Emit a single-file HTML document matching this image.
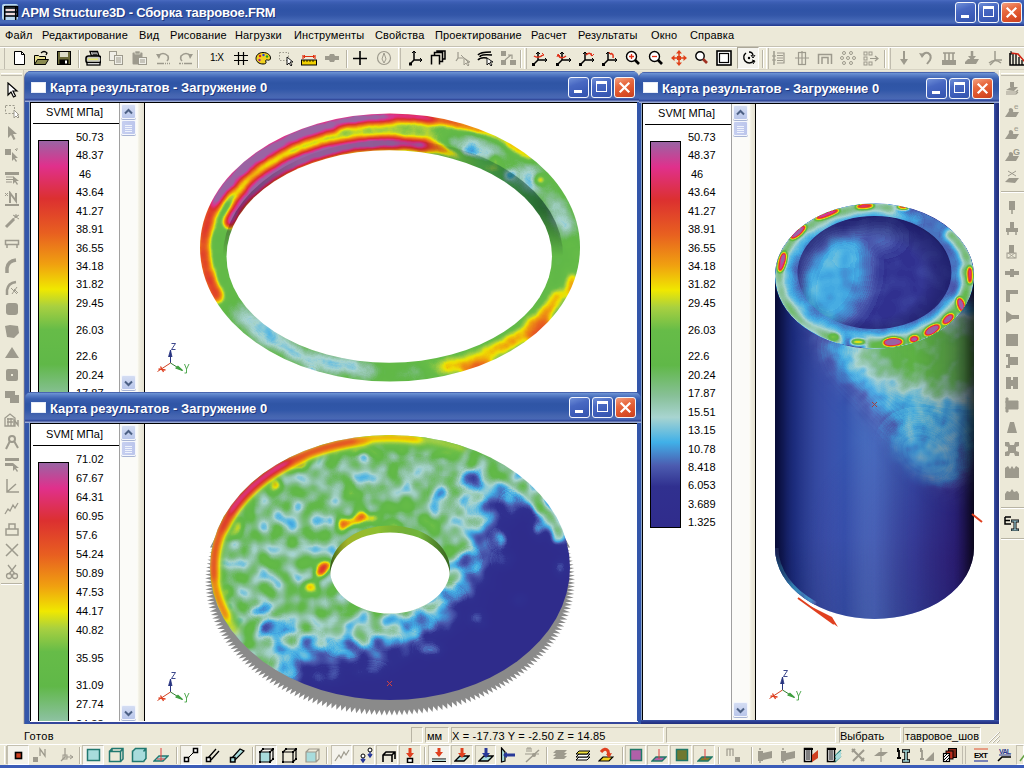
<!DOCTYPE html>
<html><head><meta charset="utf-8"><style>
*{box-sizing:border-box;margin:0;padding:0}
html,body{width:1024px;height:768px;overflow:hidden;background:#ece9d8;font-family:"Liberation Sans",sans-serif;position:relative}
div,svg{position:absolute}
.t11{font-size:11px;line-height:13px;white-space:nowrap;color:#000}
.tb{border:1px solid #f4f6fc;border-radius:3px;background:linear-gradient(160deg,#7090d8 0%,#4868c2 35%,#3c5cb8 70%,#3454ad 100%)}
.tb.close{background:linear-gradient(160deg,#f4a080 0%,#e86a40 35%,#dc5028 70%,#c84020 100%)}
.cap{left:0;top:0;right:0;height:31px;background:linear-gradient(#22368a 0px,#6f95d5 1px,#5a80c8 3px,#3a5fb0 7px,#2f55a5 12px,#3157a8 18px,#4565b0 24px,#4868b5 27px,#3a55a8 28px,#2c4090 29px,#9aaad5 30px,#9aaad5 31px)}
.ct{top:10px;color:#fff;font:bold 13px "Liberation Sans",sans-serif;line-height:15px;white-space:nowrap;text-shadow:1px 1px 0 #22387e}
.ic{width:15px;height:11px;background:#fff;border:1px solid #e6ecf8}
.sbtn{width:15px;height:15px;border-radius:2px;background:linear-gradient(#d4ddf3,#b9c6ea);border:1px solid #f4f6fc;box-shadow:0 1px 0 #a8b4d4}
.sp{height:16px;border:1px solid;border-color:#b8b4a4 #fff #fff #b8b4a4}
.bpress{border:1px solid;border-color:#aca899 #fff #fff #aca899;background:#f5f4ee}
.vsep{width:2px;border-left:1px solid #b8b4a4;border-right:1px solid #fff}
.hsep{height:2px;border-top:1px solid #b8b4a4;border-bottom:1px solid #fff}
</style></head><body>
<div style="left:0;top:0;width:1024px;height:26px;background:linear-gradient(#4a6bc0 0px,#3d5fb5 2px,#3558ab 5px,#2f53a6 10px,#3356a8 15px,#3f62b2 19px,#4a6bb8 22px,#3a58ac 24px,#263e92 25px)"></div>
<div style="left:0;top:26px;width:1024px;height:1px;background:#f6f4ec"></div>
<svg style="left:2px;top:3px" width="17" height="18" viewBox="0 0 17 18"><rect x="0" y="1" width="16" height="16" rx="2" fill="#b8d8f0"/><path d="M3 5 H15 M3 9 H15 M3 13 H15" stroke="#000" stroke-width="1.5"/><path d="M4 7 H14 M4 11 H14" stroke="#f0d8d8" stroke-width="2.2"/><path d="M2.7 3 V17 M13.7 4 V17 M15.5 3 V14" stroke="#000" stroke-width="1.5"/><path d="M3 3.5 H15.5" stroke="#000" stroke-width="1.5"/></svg>
<div style="left:21px;top:5px;color:#fff;font:bold 13px 'Liberation Sans',sans-serif;line-height:15px;letter-spacing:-0.18px;white-space:nowrap;text-shadow:1px 1px 0 #22387e">APM Structure3D - Сборка тавровое.FRM</div>
<div class="tb" style="left:955px;top:2px;width:21px;height:21px"><div style="left:5px;top:12px;width:8px;height:3px;background:#fff"></div></div><div class="tb" style="left:978px;top:2px;width:21px;height:21px"><div style="left:4px;top:3px;width:11px;height:11px;border:1px solid #fff;border-top-width:3px"></div></div><div class="tb close" style="left:1001px;top:2px;width:21px;height:21px"><svg style="left:0;top:0" width="19" height="19"><path d="M5.5 5.5 L13.5 13.5 M13.5 5.5 L5.5 13.5" stroke="#fff" stroke-width="2.2" stroke-linecap="square"/></svg></div>
<div class="t11" style="left:5px;top:29px;letter-spacing:0.15px">Файл</div>
<div class="t11" style="left:42px;top:29px;letter-spacing:0.15px">Редактирование</div>
<div class="t11" style="left:139px;top:29px;letter-spacing:0.15px">Вид</div>
<div class="t11" style="left:170px;top:29px;letter-spacing:0.15px">Рисование</div>
<div class="t11" style="left:235px;top:29px;letter-spacing:0.15px">Нагрузки</div>
<div class="t11" style="left:294px;top:29px;letter-spacing:0.15px">Инструменты</div>
<div class="t11" style="left:375px;top:29px;letter-spacing:0.15px">Свойства</div>
<div class="t11" style="left:435px;top:29px;letter-spacing:0.15px">Проектирование</div>
<div class="t11" style="left:531px;top:29px;letter-spacing:0.15px">Расчет</div>
<div class="t11" style="left:578px;top:29px;letter-spacing:0.15px">Результаты</div>
<div class="t11" style="left:651px;top:29px;letter-spacing:0.15px">Окно</div>
<div class="t11" style="left:690px;top:29px;letter-spacing:0.15px">Справка</div>
<div style="left:0;top:46px;width:1024px;height:1px;background:#c5c1b2"></div>
<div style="left:0;top:47px;width:1024px;height:1px;background:#fff"></div>
<div style="left:0;top:48px;width:1024px;height:22px;background:#ece9d8"></div>
<div style="left:0;top:69px;width:1024px;height:1px;background:#d8d4c4"></div>
<div style="left:4px;top:48px;width:1px;height:21px;background:#c0bcae"></div>
<div class="vsep" style="left:78px;top:50px;height:18px"></div>
<div class="vsep" style="left:197px;top:50px;height:18px"></div>
<div class="vsep" style="left:346px;top:50px;height:18px"></div>
<div class="vsep" style="left:520px;top:50px;height:18px"></div>
<div class="vsep" style="left:762px;top:50px;height:18px"></div>
<div class="vsep" style="left:884px;top:50px;height:18px"></div>
<div style="left:398px;top:48px;width:3px;height:21px;border-left:1px solid #fff;border-right:1px solid #c0bcae"></div>
<div style="left:524px;top:48px;width:3px;height:21px;border-left:1px solid #fff;border-right:1px solid #c0bcae"></div>
<div style="left:766px;top:48px;width:3px;height:21px;border-left:1px solid #fff;border-right:1px solid #c0bcae"></div>
<div style="left:888px;top:48px;width:3px;height:21px;border-left:1px solid #fff;border-right:1px solid #c0bcae"></div>
<svg style="left:12px;top:50px" width="16" height="16" viewBox="0 0 16 16"><path d="M2.5 1.5 H9.5 L12.5 4.5 V14.5 H2.5 Z" fill="#fff" stroke="#000"/><path d="M9.5 1.5 V4.5 H12.5" fill="none" stroke="#000"/></svg>
<svg style="left:33px;top:50px" width="16" height="16" viewBox="0 0 16 16"><path d="M1.5 5.5 H5.5 L6.5 6.5 H12.5 V14.5 H1.5 Z" fill="#e8e090" stroke="#000"/><path d="M1.5 14.5 L4.5 9.5 H15.5 L12.5 14.5 Z" fill="#8a8a50" stroke="#000"/><path d="M8 3 Q11 0 14 3 L13 5" fill="none" stroke="#000" stroke-width="1.2"/></svg>
<svg style="left:56px;top:50px" width="16" height="16" viewBox="0 0 16 16"><rect x="1.5" y="1.5" width="13" height="13" fill="#6a6a38" stroke="#000"/><rect x="4" y="2" width="8" height="5" fill="#dcdcc8"/><rect x="3.5" y="9.5" width="9" height="5" fill="#000"/><rect x="9" y="10.5" width="2" height="3" fill="#fff"/></svg>
<svg style="left:85px;top:50px" width="16" height="16" viewBox="0 0 16 16"><path d="M5 1.5 H12.5 L14 6 H6.5 Z" fill="#fff" stroke="#000" stroke-width="1.3"/><path d="M7 3 H12 M7.5 4.5 H12.5" stroke="#000" stroke-width="0.8"/><rect x="1" y="6" width="15" height="7" rx="2.5" fill="#c8c8c0" stroke="#000" stroke-width="1.6"/><rect x="3" y="8.5" width="10" height="1.6" fill="#e8e870"/><rect x="2" y="12.5" width="13" height="2.5" fill="#fff" stroke="#000" stroke-width="1.3"/></svg>
<svg style="left:108px;top:50px" width="16" height="16" viewBox="0 0 16 16"><rect x="1.5" y="1.5" width="7" height="9" fill="#f0efe8" stroke="#9d9a8d"/><rect x="6.5" y="5.5" width="8" height="9" fill="#f0efe8" stroke="#9d9a8d"/><path d="M8 8 H13 M8 10 H13 M8 12 H13" stroke="#9d9a8d"/></svg>
<svg style="left:131px;top:50px" width="16" height="16" viewBox="0 0 16 16"><rect x="1.5" y="2.5" width="10" height="12" rx="1" fill="#9d9a8d"/><rect x="4" y="1" width="5" height="3" fill="#9d9a8d" stroke="#ece9d8" stroke-width="0.6"/><rect x="7.5" y="7.5" width="8" height="7" fill="#f0efe8" stroke="#9d9a8d"/><path d="M9 10 H14 M9 12 H14" stroke="#9d9a8d"/></svg>
<svg style="left:155px;top:50px" width="16" height="16" viewBox="0 0 16 16"><path d="M3 6 Q8 1 13 6 Q14 9 12 11" fill="none" stroke="#9d9a8d" stroke-width="1.6"/><path d="M1 4 L4 9 L6 4 Z" fill="#9d9a8d"/><path d="M2 13.5 H15" stroke="#9d9a8d" stroke-width="1.5" stroke-dasharray="7 1 1 1 1 1"/></svg>
<svg style="left:178px;top:50px" width="16" height="16" viewBox="0 0 16 16"><path d="M13 6 Q8 1 3 6 Q2 9 4 11" fill="none" stroke="#9d9a8d" stroke-width="1.6"/><path d="M15 4 L12 9 L10 4 Z" fill="#9d9a8d"/><path d="M1 13.5 H14" stroke="#9d9a8d" stroke-width="1.5" stroke-dasharray="2 1 1 1 9 1"/></svg>
<div style="left:210px;top:52px;font:10px 'Liberation Sans',sans-serif;line-height:12px;letter-spacing:-0.6px;color:#000">1:X</div>
<svg style="left:233px;top:50px" width="16" height="16" viewBox="0 0 16 16"><path d="M5.5 2 V15 M10.5 2 V15 M1 5.5 H15 M1 10.5 H15" stroke="#000" stroke-width="1.2"/></svg>
<svg style="left:255px;top:50px" width="16" height="16" viewBox="0 0 16 16"><path d="M8 2.5 C13 2.5 15.5 5.5 15.5 8 C15.5 10 14 10.5 12.5 10 C11 9.5 10 10.5 11 12 C11.5 13.5 10 14 8 14 C4 14 1 11.5 1 8.5 C1 5 4 2.5 8 2.5 Z" fill="#f0d020" stroke="#000"/><circle cx="5" cy="6" r="1.2" fill="#e02020"/><circle cx="8.5" cy="5" r="1.2" fill="#2040e0"/><circle cx="12" cy="6.5" r="1.2" fill="#20a020"/><circle cx="4.5" cy="10" r="1.2" fill="#a020a0"/></svg>
<svg style="left:278px;top:50px" width="16" height="16" viewBox="0 0 16 16"><rect x="1.5" y="2.5" width="9" height="8" fill="none" stroke="#9d9a8d" stroke-dasharray="1.5 1.5"/><path d="M9 7 L9 15 L11 13 L13 16 L14 15 L12 12 L15 12 Z" fill="#fff" stroke="#000" stroke-width="0.9"/></svg>
<svg style="left:301px;top:50px" width="16" height="16" viewBox="0 0 16 16"><path d="M2 5 V9 M14 5 V9 M3 6.5 H13" stroke="#e03010" stroke-width="1.2"/><path d="M4 5 L2.5 6.5 L4 8 M12 5 L13.5 6.5 L12 8" fill="none" stroke="#e03010"/><rect x="0.5" y="10" width="15" height="5" fill="#f0d000" stroke="#000"/><path d="M3 10 V12 M6 10 V12 M9 10 V12 M12 10 V12" stroke="#000" stroke-width="0.8"/></svg>
<svg style="left:324px;top:50px" width="16" height="16" viewBox="0 0 16 16"><path d="M1 6 H5 L6 4 H10 L11 6 H15 V10 H11 L10 12 H6 L5 10 H1 Z" fill="#9d9a8d"/></svg>
<svg style="left:352px;top:50px" width="16" height="16" viewBox="0 0 16 16"><path d="M8 1 V15 M1 8.5 H15" stroke="#000" stroke-width="1.6"/></svg>
<svg style="left:376px;top:50px" width="16" height="16" viewBox="0 0 16 16"><circle cx="8" cy="8" r="6.5" fill="none" stroke="#9d9a8d" stroke-width="1.2"/><path d="M8 3 L10 9 L8 13 L6 9 Z" fill="none" stroke="#9d9a8d"/></svg>
<svg style="left:408px;top:50px" width="16" height="16" viewBox="0 0 16 16"><path d="M6 2 V10 L2 14 M6 10 H14" fill="none" stroke="#000" stroke-width="1.5"/><path d="M4 3 L6 1 L8 3 M12 8 L14 10 L12 12" fill="none" stroke="#000"/><rect x="1" y="12.5" width="3" height="3" fill="#000"/></svg>
<svg style="left:430px;top:50px" width="16" height="16" viewBox="0 0 16 16"><path d="M1.5 14.5 V5.5 H9.5 V14.5 M4.5 5.5 V2.5 H12.5 V11.5 H9.5 M7 2.5 V1 H15 V9 H12.5" fill="none" stroke="#000" stroke-width="1.5"/></svg>
<svg style="left:455px;top:50px" width="16" height="16" viewBox="0 0 16 16"><path d="M3 2 V8 L1 11 M3 8 H8" fill="none" stroke="#9d9a8d" stroke-width="1.2"/><path d="M6 5 L14 13 M9 8 L9 15 L11 13 L13 16 L14 15 L12 12 L15 12 Z" fill="none" stroke="#9d9a8d"/></svg>
<svg style="left:477px;top:50px" width="16" height="16" viewBox="0 0 16 16"><path d="M1 5 Q3 2 14 2 M3 7 Q3 4 15 5 M1 10 Q3 7 10 8" fill="none" stroke="#000" stroke-width="1.6"/><path d="M10 8 L10 15 L12 13 L14 16 L15 15 L13 12 L16 12 Z" fill="#fff" stroke="#000" stroke-width="0.9"/></svg>
<svg style="left:500px;top:50px" width="16" height="16" viewBox="0 0 16 16"><rect x="1" y="1" width="5" height="5" fill="#9d9a8d"/><rect x="10" y="10" width="6" height="5" fill="#9d9a8d"/><rect x="1" y="10" width="5" height="5" fill="#9d9a8d"/><path d="M5 10 L11 5 M8 5 H12 V9" fill="none" stroke="#9d9a8d" stroke-width="1.2"/></svg>
<svg style="left:532px;top:50px" width="16" height="16" viewBox="0 0 16 16"><path d="M6 3 V10 L1 15 M6 10 H15" fill="none" stroke="#000" stroke-width="1.5"/><path d="M4 4 L6 2 L8 4 M13 8 L15 10 L13 12" fill="none" stroke="#000"/><rect x="0" y="13" width="3" height="3" fill="#000"/><path d="M2 6 Q6 9 11 5" fill="none" stroke="#e03018" stroke-width="1.5"/><path d="M10 3 L12 5 L9 6" fill="none" stroke="#e03018"/></svg>
<svg style="left:556px;top:50px" width="16" height="16" viewBox="0 0 16 16"><path d="M6 3 V10 L1 15 M6 10 H15" fill="none" stroke="#000" stroke-width="1.5"/><path d="M4 4 L6 2 L8 4 M13 8 L15 10 L13 12" fill="none" stroke="#000"/><rect x="0" y="13" width="3" height="3" fill="#000"/><path d="M2 5 Q5 10 10 6" fill="none" stroke="#e03018" stroke-width="1.5"/><path d="M1 7 L2 4 L4 6" fill="none" stroke="#e03018"/></svg>
<svg style="left:579px;top:50px" width="16" height="16" viewBox="0 0 16 16"><path d="M6 3 V10 L1 15 M6 10 H15" fill="none" stroke="#000" stroke-width="1.5"/><path d="M4 4 L6 2 L8 4 M13 8 L15 10 L13 12" fill="none" stroke="#000"/><rect x="0" y="13" width="3" height="3" fill="#000"/><path d="M7 5 Q11 1 13 6" fill="none" stroke="#e03018" stroke-width="1.5"/><path d="M12 3 L13 6 L15 4" fill="none" stroke="#e03018"/></svg>
<svg style="left:602px;top:50px" width="16" height="16" viewBox="0 0 16 16"><path d="M6 3 V10 L1 15 M6 10 H15" fill="none" stroke="#000" stroke-width="1.5"/><path d="M4 4 L6 2 L8 4 M13 8 L15 10 L13 12" fill="none" stroke="#000"/><rect x="0" y="13" width="3" height="3" fill="#000"/><path d="M8 4 Q12 3 11 8" fill="none" stroke="#e03018" stroke-width="1.5"/><path d="M7 2 L8 4 L10 3" fill="none" stroke="#e03018"/></svg>
<svg style="left:625px;top:50px" width="16" height="16" viewBox="0 0 16 16"><circle cx="6.5" cy="6.5" r="5" fill="#fff" stroke="#000" stroke-width="1.4"/><path d="M4 6.5 H9 M6.5 4 V9" stroke="#e03018" stroke-width="1.3"/><path d="M10 10 L14 14" stroke="#000" stroke-width="2.6"/></svg>
<svg style="left:648px;top:50px" width="16" height="16" viewBox="0 0 16 16"><circle cx="6.5" cy="6.5" r="5" fill="#fff" stroke="#000" stroke-width="1.4"/><path d="M4 6.5 H9" stroke="#e03018" stroke-width="1.3"/><path d="M10 10 L14 14" stroke="#000" stroke-width="2.6"/></svg>
<svg style="left:671px;top:50px" width="16" height="16" viewBox="0 0 16 16"><path d="M8 0 L11 3.5 H5 Z M8 16 L11 12.5 H5 Z M0 8 L3.5 5 V11 Z M16 8 L12.5 5 V11 Z" fill="#e04018"/><rect x="6" y="6" width="4" height="4" fill="#e04018"/><path d="M8 3 V13 M3 8 H13" stroke="#e04018" stroke-width="1.5"/></svg>
<svg style="left:694px;top:50px" width="16" height="16" viewBox="0 0 16 16"><circle cx="6" cy="6" r="4.2" fill="#fff" stroke="#000" stroke-width="1.4"/><path d="M9 9 L13 13" stroke="#a03020" stroke-width="2.6"/></svg>
<svg style="left:716px;top:50px" width="16" height="16" viewBox="0 0 16 16"><rect x="1" y="1" width="14" height="14" fill="#fff" stroke="#000" stroke-width="1.6"/><rect x="3.5" y="3.5" width="9" height="9" fill="#fff" stroke="#000" stroke-width="1.2"/></svg>
<div class="bpress" style="left:737px;top:47px;width:22px;height:22px"></div>
<svg style="left:741px;top:50px" width="16" height="16" viewBox="0 0 16 16"><path d="M5 3 Q1 6 4 11 Q8 15 13 11" fill="none" stroke="#000" stroke-width="1.4"/><path d="M8 2 Q12 2 12 6" fill="none" stroke="#000" stroke-width="1.4"/><path d="M10 5 L12 8 L14 5 M11 10 L14 11 L12 14" fill="none" stroke="#000"/><circle cx="8" cy="8" r="1.2" fill="#000"/></svg>
<svg style="left:771px;top:50px" width="16" height="16" viewBox="0 0 16 16"><path d="M3 1 V15" stroke="#9d9a8d" stroke-width="1.5"/><path d="M6 3 H13 V13 H6 M6 5.5 H12 M6 8 H12 M6 10.5 H12" fill="none" stroke="#9d9a8d" stroke-width="1.2"/><path d="M1 6 H5 M1 10 H5" stroke="#9d9a8d"/></svg>
<svg style="left:794px;top:50px" width="16" height="16" viewBox="0 0 16 16"><rect x="4.5" y="2.5" width="7" height="12" fill="none" stroke="#9d9a8d" stroke-width="1.2"/><path d="M1 8 H15 M8 1 V15" stroke="#9d9a8d" stroke-width="1.2"/></svg>
<svg style="left:817px;top:50px" width="16" height="16" viewBox="0 0 16 16"><path d="M1.5 14 V4.5 H14.5 V14 M5 14 V7.5 H11 V14" fill="none" stroke="#9d9a8d" stroke-width="1.5"/></svg>
<svg style="left:840px;top:50px" width="16" height="16" viewBox="0 0 16 16"><circle cx="4" cy="3" r="1.5" fill="none" stroke="#9d9a8d"/><circle cx="11" cy="3" r="1.5" fill="none" stroke="#9d9a8d"/><circle cx="2" cy="8" r="1.5" fill="none" stroke="#9d9a8d"/><circle cx="14" cy="8" r="1.5" fill="none" stroke="#9d9a8d"/><circle cx="4" cy="13" r="1.5" fill="none" stroke="#9d9a8d"/><circle cx="11" cy="13" r="1.5" fill="none" stroke="#9d9a8d"/><circle cx="8" cy="8" r="1.5" fill="none" stroke="#9d9a8d"/></svg>
<svg style="left:863px;top:50px" width="16" height="16" viewBox="0 0 16 16"><rect x="1" y="2" width="3" height="3" fill="none" stroke="#9d9a8d"/><rect x="6" y="2" width="3" height="3" fill="none" stroke="#9d9a8d"/><rect x="1" y="7" width="3" height="3" fill="none" stroke="#9d9a8d"/><rect x="1" y="12" width="3" height="3" fill="none" stroke="#9d9a8d"/><rect x="6" y="12" width="3" height="3" fill="none" stroke="#9d9a8d"/><path d="M7 8.5 H15 M12 6 L15 8.5 L12 11" fill="none" stroke="#9d9a8d" stroke-width="1.2"/></svg>
<svg style="left:896px;top:50px" width="16" height="16" viewBox="0 0 16 16"><path d="M8 1 V13" stroke="#9d9a8d" stroke-width="2"/><path d="M4 9 L8 15 L12 9 Z" fill="#9d9a8d"/></svg>
<svg style="left:918px;top:50px" width="16" height="16" viewBox="0 0 16 16"><path d="M4 6 Q6 2 10 3 Q14 5 12 10 L9 14" fill="none" stroke="#9d9a8d" stroke-width="2"/><path d="M1 3 L4 8 L7 4 Z" fill="#9d9a8d"/></svg>
<svg style="left:941px;top:50px" width="16" height="16" viewBox="0 0 16 16"><rect x="1" y="10" width="14" height="5" fill="#9d9a8d"/><path d="M4 3 V10 M8 3 V10 M12 3 V10 M2 3 H14" stroke="#9d9a8d" stroke-width="1.6"/></svg>
<svg style="left:964px;top:50px" width="16" height="16" viewBox="0 0 16 16"><path d="M1 12 L4 9 H15 L12 14 H1 Z" fill="#9d9a8d"/><path d="M8 1 V9" stroke="#9d9a8d" stroke-width="2.5"/><path d="M4 6 L8 11 L12 6 Z" fill="#9d9a8d"/></svg>
<svg style="left:987px;top:50px" width="16" height="16" viewBox="0 0 16 16"><path d="M8 1 V10 L3 15 M8 10 H15" fill="none" stroke="#9d9a8d" stroke-width="1.5"/><path d="M2 13 Q8 8 14 13" fill="none" stroke="#9d9a8d" stroke-width="1.5"/></svg>
<svg style="left:1009px;top:50px" width="16" height="16" viewBox="0 0 16 16"><path d="M1 3 V15 H16" fill="none" stroke="#000" stroke-width="1.5"/><path d="M4 4 V15 M7 4 V15 M10 7 V15 M13 10 V15" stroke="#000" stroke-width="1.3"/><path d="M2 3 L9 4 L16 12" fill="none" stroke="#d02010" stroke-width="1.5"/><path d="M2 1 L2 5" stroke="#000"/></svg>
<div style="left:0;top:70px;width:23px;height:658px;background:#ece9d8"></div>
<div style="left:1px;top:73px;width:21px;height:3px;border-top:1px solid #fff;border-bottom:1px solid #c0bcae"></div>
<div style="left:23px;top:70px;width:1px;height:658px;background:#d0ccbc"></div>
<svg style="left:4px;top:82px" width="16" height="16" viewBox="0 0 16 16"><path d="M4 1 V13 L7 10 L9.5 15 L11.5 14 L9 9 H13 Z" fill="#fff" stroke="#000" stroke-width="1.2"/></svg>
<svg style="left:4px;top:103px" width="16" height="16" viewBox="0 0 16 16"><rect x="1.5" y="2.5" width="9" height="8" fill="none" stroke="#9d9a8d" stroke-dasharray="2 1.5"/><path d="M10 7 V15 L12 13 L14 15 L15 14 L13 12 H15 Z" fill="#fff" stroke="#9d9a8d"/></svg>
<svg style="left:4px;top:125px" width="16" height="16" viewBox="0 0 16 16"><path d="M4 1 V13 L7 10 L9.5 15 L11.5 14 L9 9 H13 Z" fill="#9d9a8d"/></svg>
<svg style="left:4px;top:147px" width="16" height="16" viewBox="0 0 16 16"><rect x="1" y="2" width="6" height="6" fill="#9d9a8d"/><path d="M8 5 V14 L10 12 L12 15 L13 14 L11 11 H14 Z" fill="#9d9a8d"/><path d="M11 2 L13 4 M13 1 V3" stroke="#9d9a8d"/></svg>
<svg style="left:4px;top:169px" width="16" height="16" viewBox="0 0 16 16"><rect x="1" y="3" width="14" height="3" fill="#9d9a8d"/><path d="M2 8 H9 M2 10.5 H9 M2 13 H8" stroke="#9d9a8d" stroke-width="1.2"/><path d="M9 7 V15 L11 13 L13 16 L14 15 L12 12 H15 Z" fill="#9d9a8d"/></svg>
<svg style="left:4px;top:191px" width="16" height="16" viewBox="0 0 16 16"><path d="M1 2 L4 5 M4 2 L1 5" stroke="#9d9a8d"/><path d="M6 12 V2 L12 10 V2" fill="none" stroke="#9d9a8d" stroke-width="2"/><rect x="1" y="13" width="14" height="2" fill="#9d9a8d"/></svg>
<svg style="left:4px;top:213px" width="16" height="16" viewBox="0 0 16 16"><path d="M2 14 L10 6" stroke="#9d9a8d" stroke-width="3"/><path d="M12 1 V5 M10 3 H14 M9 2 L15 6 M15 2 L9 6" stroke="#9d9a8d"/></svg>
<svg style="left:4px;top:236px" width="16" height="16" viewBox="0 0 16 16"><rect x="1.5" y="4.5" width="13" height="4" fill="none" stroke="#9d9a8d" stroke-width="1.5"/><path d="M3 8 V12 M13 8 V12" stroke="#9d9a8d" stroke-width="1.5"/></svg>
<svg style="left:4px;top:258px" width="16" height="16" viewBox="0 0 16 16"><path d="M3 15 V10 Q4 3 12 2" fill="none" stroke="#9d9a8d" stroke-width="3.5"/></svg>
<svg style="left:4px;top:280px" width="16" height="16" viewBox="0 0 16 16"><path d="M3 15 V10 Q4 3 12 2" fill="none" stroke="#9d9a8d" stroke-width="2.5"/><path d="M7 8 L13 14 M10 9 L14 13 M13 7 L8 14" stroke="#9d9a8d"/></svg>
<svg style="left:4px;top:301px" width="16" height="16" viewBox="0 0 16 16"><rect x="2" y="2" width="12" height="12" rx="3" fill="#9d9a8d"/></svg>
<svg style="left:4px;top:323px" width="16" height="16" viewBox="0 0 16 16"><path d="M1 3 L6 2 L14 3 L15 10 L10 15 L3 14 Z" fill="#9d9a8d"/></svg>
<svg style="left:4px;top:345px" width="16" height="16" viewBox="0 0 16 16"><path d="M8 2 L15 13 H1 Z" fill="#9d9a8d"/></svg>
<svg style="left:4px;top:367px" width="16" height="16" viewBox="0 0 16 16"><rect x="2" y="2" width="12" height="12" rx="2" fill="#9d9a8d"/><rect x="7" y="7" width="2" height="2" fill="#ece9d8"/></svg>
<svg style="left:4px;top:389px" width="16" height="16" viewBox="0 0 16 16"><path d="M1 2 H11 V6 H15 V14 H6 V9 H1 Z" fill="#9d9a8d"/></svg>
<svg style="left:4px;top:412px" width="16" height="16" viewBox="0 0 16 16"><path d="M1 14 V6 L6 2 L11 6 V14 Z M3 7 H9 M3 10 H9 M4 6 V14 M7 6 V14" fill="none" stroke="#9d9a8d" stroke-width="1.3"/><path d="M10 14 V8 L14 13 V8" fill="none" stroke="#9d9a8d" stroke-width="1.5"/></svg>
<svg style="left:4px;top:435px" width="16" height="16" viewBox="0 0 16 16"><circle cx="8" cy="4" r="3" fill="none" stroke="#9d9a8d" stroke-width="2"/><path d="M6 6 L2 14 M10 6 L14 13" stroke="#9d9a8d" stroke-width="2"/></svg>
<svg style="left:4px;top:456px" width="16" height="16" viewBox="0 0 16 16"><rect x="1" y="2" width="14" height="3" fill="#9d9a8d"/><rect x="1" y="7" width="8" height="3" fill="#9d9a8d"/><path d="M9 7 V15 L11 13 L13 16 L14 15 L12 12 H15 Z" fill="#9d9a8d"/></svg>
<svg style="left:4px;top:478px" width="16" height="16" viewBox="0 0 16 16"><path d="M3 1 V14 H15 M3 14 L12 6" fill="none" stroke="#9d9a8d" stroke-width="1.5"/></svg>
<svg style="left:4px;top:500px" width="16" height="16" viewBox="0 0 16 16"><path d="M1 14 L4 9 L6 11 L9 5 L11 8 L14 3" fill="none" stroke="#9d9a8d" stroke-width="1.3"/></svg>
<svg style="left:4px;top:521px" width="16" height="16" viewBox="0 0 16 16"><rect x="2" y="8" width="12" height="6" fill="none" stroke="#9d9a8d" stroke-width="1.5"/><path d="M5 8 V3 H11 V8" fill="none" stroke="#9d9a8d" stroke-width="1.5"/></svg>
<svg style="left:4px;top:542px" width="16" height="16" viewBox="0 0 16 16"><path d="M2 2 L8 8 L2 14 M14 2 L8 8 L14 14" fill="none" stroke="#9d9a8d" stroke-width="1.5"/></svg>
<svg style="left:4px;top:564px" width="16" height="16" viewBox="0 0 16 16"><circle cx="5" cy="12" r="2.5" fill="none" stroke="#9d9a8d" stroke-width="1.3"/><circle cx="11" cy="12" r="2.5" fill="none" stroke="#9d9a8d" stroke-width="1.3"/><path d="M5 10 L12 1 M11 10 L4 1" stroke="#9d9a8d" stroke-width="1.3"/></svg>
<div class="hsep" style="left:1px;top:583px;width:21px"></div>
<div style="left:999px;top:70px;width:25px;height:658px;background:#ece9d8"></div>
<div style="left:999px;top:70px;width:1px;height:658px;background:#fff"></div>
<div style="left:1001px;top:73px;width:23px;height:3px;border-top:1px solid #fff;border-bottom:1px solid #c0bcae"></div>
<svg style="left:1004px;top:81px" width="16" height="16" viewBox="0 0 16 16"><path d="M2 9 L7 6 H14 L10 10 Z" fill="#9d9a8d"/><path d="M2 11 H12 L14 9 M2 13 H12 L14 11" fill="none" stroke="#9d9a8d" stroke-width="1.2"/><rect x="6" y="1" width="4" height="5" fill="#9d9a8d"/></svg>
<svg style="left:1004px;top:103px" width="16" height="16" viewBox="0 0 16 16"><path d="M1 14 L5 8 Q4 5 7 5 Q10 6 9 9 L15 9 L12 14 Z" fill="#9d9a8d"/><text x="10" y="6" font-size="8" fill="#9d9a8d" font-family="Liberation Sans">e</text></svg>
<svg style="left:1004px;top:125px" width="16" height="16" viewBox="0 0 16 16"><path d="M1 14 L5 8 Q4 5 7 5 Q10 6 9 9 L15 9 L12 14 Z" fill="#9d9a8d"/><text x="10" y="6" font-size="8" fill="#9d9a8d" font-family="Liberation Sans">e</text></svg>
<svg style="left:1004px;top:147px" width="16" height="16" viewBox="0 0 16 16"><path d="M1 14 L5 8 Q4 5 7 5 Q10 6 9 9 L15 9 L12 14 Z" fill="#9d9a8d"/><text x="9" y="8" font-size="9" font-weight="bold" fill="#9d9a8d" font-family="Liberation Sans">G</text></svg>
<svg style="left:1004px;top:169px" width="16" height="16" viewBox="0 0 16 16"><path d="M1 13 L5 9 H15 L11 14 Z" fill="#9d9a8d"/><path d="M4 2 L12 7 M12 2 L4 7" stroke="#9d9a8d"/></svg>
<svg style="left:1004px;top:199px" width="16" height="16" viewBox="0 0 16 16"><rect x="5" y="2" width="6" height="9" fill="#9d9a8d"/><path d="M8 11 V15" stroke="#9d9a8d" stroke-width="1.5"/></svg>
<svg style="left:1004px;top:221px" width="16" height="16" viewBox="0 0 16 16"><rect x="6" y="1" width="4" height="6" fill="#9d9a8d"/><rect x="2" y="7" width="12" height="4" fill="#9d9a8d"/><path d="M4 11 V14 M12 11 V14" stroke="#9d9a8d" stroke-width="1.5"/></svg>
<svg style="left:1004px;top:244px" width="16" height="16" viewBox="0 0 16 16"><rect x="5" y="1" width="5" height="8" fill="#9d9a8d"/><rect x="3" y="9" width="9" height="5" fill="none" stroke="#9d9a8d"/><path d="M4 14 L11 9 M4 9 L11 14" stroke="#9d9a8d" stroke-width="0.8"/></svg>
<svg style="left:1004px;top:265px" width="16" height="16" viewBox="0 0 16 16"><rect x="1" y="6" width="14" height="4" fill="#9d9a8d"/><rect x="6" y="4" width="4" height="8" fill="#9d9a8d"/></svg>
<svg style="left:1004px;top:288px" width="16" height="16" viewBox="0 0 16 16"><path d="M2 14 V2 H14 V6 H6 V14 Z" fill="#9d9a8d"/></svg>
<svg style="left:1004px;top:309px" width="16" height="16" viewBox="0 0 16 16"><path d="M2 2 L8 6 H15 V10 H8 L2 14 Z" fill="#9d9a8d"/></svg>
<svg style="left:1004px;top:332px" width="16" height="16" viewBox="0 0 16 16"><rect x="2" y="2" width="12" height="12" fill="#9d9a8d"/></svg>
<svg style="left:1004px;top:353px" width="16" height="16" viewBox="0 0 16 16"><path d="M2 1 H6 V4 H14 V12 H6 V15 H2 V12 H4 V4 H2 Z" fill="#9d9a8d"/></svg>
<svg style="left:1004px;top:375px" width="16" height="16" viewBox="0 0 16 16"><path d="M2 2 H7 V5 H9 V2 H14 V14 H9 V11 H7 V14 H2 Z" fill="#9d9a8d"/></svg>
<svg style="left:1004px;top:397px" width="16" height="16" viewBox="0 0 16 16"><path d="M2 1 H4 V4 H14 V12 H4 V15 H2 Z M1 5 H4 M1 11 H4" fill="#9d9a8d" stroke="#9d9a8d"/></svg>
<svg style="left:1004px;top:420px" width="16" height="16" viewBox="0 0 16 16"><path d="M6 2 H10 L13 13 H3 Z" fill="#9d9a8d"/></svg>
<svg style="left:1004px;top:441px" width="16" height="16" viewBox="0 0 16 16"><path d="M1 1 H5 L6 4 H10 L11 1 H15 V5 L12 6 V10 L15 11 V15 H11 L10 12 H6 L5 15 H1 V11 L4 10 V6 L1 5 Z" fill="#9d9a8d"/></svg>
<svg style="left:1004px;top:464px" width="16" height="16" viewBox="0 0 16 16"><path d="M1 14 V4 L4 2 L6 5 L8 2 L10 5 L12 2 L15 4 V14 Z" fill="#9d9a8d"/></svg>
<svg style="left:1004px;top:486px" width="16" height="16" viewBox="0 0 16 16"><path d="M1 14 V8 L3 5 L6 6 L8 3 L10 6 L13 5 L15 8 V14 Z" fill="#9d9a8d"/></svg>
<div class="hsep" style="left:1001px;top:191px;width:23px"></div>
<div class="hsep" style="left:1001px;top:507px;width:23px"></div>
<svg style="left:1004px;top:515px" width="16" height="16" viewBox="0 0 16 16"><path d="M1 2 H7 M1 2 V9 H7 M1 5.5 H6" fill="none" stroke="#000" stroke-width="1.5"/><path d="M7 6 H15 M7 15 H15 M11 6 V15" stroke="#000" stroke-width="3"/><path d="M7.5 6 H14.5 M7.5 15 H14.5 M11 6.5 V14.5" stroke="#a8dce8" stroke-width="1.2"/></svg>
<div class="hsep" style="left:1001px;top:538px;width:23px"></div>
<div style="left:24px;top:71px;width:975px;height:653px;background:#e4e1d4"></div>
<div style="left:638px;top:72px;width:361px;height:652px;background:#3356aa;border-radius:7px 7px 0 0;overflow:hidden;border-left:1px solid #5a6aa0"><div class="cap"></div><div class="ic" style="left:4px;top:10px"></div><div class="ct" style="left:23px;top:9px">Карта результатов - Загружение 0</div><div class="tb" style="left:287px;top:6px;width:21px;height:21px"><div style="left:5px;top:12px;width:8px;height:3px;background:#fff"></div></div><div class="tb" style="left:310px;top:6px;width:21px;height:21px"><div style="left:4px;top:3px;width:11px;height:11px;border:1px solid #fff;border-top-width:3px"></div></div><div class="tb close" style="left:333px;top:6px;width:21px;height:21px"><svg style="left:0;top:0" width="19" height="19"><path d="M5.5 5.5 L13.5 13.5 M13.5 5.5 L5.5 13.5" stroke="#fff" stroke-width="2.2" stroke-linecap="square"/></svg></div></div>
<div style="left:641px;top:103px;width:1px;height:617px;background:#90a8c8"></div>
<div style="left:642px;top:103px;width:352px;height:617px;background:#fff;border-top:1px solid #000;border-left:1px solid #000;overflow:hidden">
<div style="left:0;top:0;width:88px;height:616px;background:#fff;overflow:hidden">
<div class="t11" style="left:15px;top:3px;letter-spacing:0.1px">SVM[ МПа]</div>
<div style="left:2px;top:20px;width:86px;height:1px;background:#000"></div>
<div style="left:7px;top:37px;width:31px;height:387px;border:1px solid #000;background:linear-gradient(#9a64a4 0.0%,#e0308c 6.5%,#dc3030 15.0%,#e86020 24.0%,#f0a010 32.0%,#f0e800 38.5%,#a8d040 43.0%,#66bc48 49.0%,#60b848 58.0%,#88c098 66.0%,#a8d4d0 71.5%,#40b0e8 78.0%,#4c5cb0 84.0%,#30308f 89.5%,#302c8c 100.0%)"></div>
<div class="t11" style="left:45px;top:27px">50.73</div>
<div class="t11" style="left:45px;top:45px">48.37</div>
<div class="t11" style="left:48px;top:64px">46</div>
<div class="t11" style="left:45px;top:82px">43.64</div>
<div class="t11" style="left:45px;top:101px">41.27</div>
<div class="t11" style="left:45px;top:119px">38.91</div>
<div class="t11" style="left:45px;top:138px">36.55</div>
<div class="t11" style="left:45px;top:156px">34.18</div>
<div class="t11" style="left:45px;top:174px">31.82</div>
<div class="t11" style="left:45px;top:193px">29.45</div>
<div class="t11" style="left:45px;top:220px">26.03</div>
<div class="t11" style="left:45px;top:246px">22.6</div>
<div class="t11" style="left:45px;top:265px">20.24</div>
<div class="t11" style="left:45px;top:283px">17.87</div>
<div class="t11" style="left:45px;top:302px">15.51</div>
<div class="t11" style="left:45px;top:320px">13.15</div>
<div class="t11" style="left:45px;top:339px">10.78</div>
<div class="t11" style="left:45px;top:357px">8.418</div>
<div class="t11" style="left:45px;top:375px">6.053</div>
<div class="t11" style="left:45px;top:394px">3.689</div>
<div class="t11" style="left:45px;top:412px">1.325</div>
</div>
<div style="left:88px;top:0;width:18px;height:616px;background:#fbfbf8;border-left:1px solid #a0a0a0"></div>
<div class="sbtn" style="left:90px;top:1px"><svg style="left:2px;top:3px" width="9" height="7"><path d="M1 5.5 L4.5 2 L8 5.5" fill="none" stroke="#4d6185" stroke-width="2"/></svg></div>
<div class="sbtn" style="left:90px;top:17px;background:linear-gradient(90deg,#c6cff0,#bcc6ec)"><svg style="left:3px;top:3px" width="8" height="8"><path d="M0 1.5 H7 M0 3.5 H7 M0 5.5 H7 M0 7.5 H7" stroke="#eef2fc" stroke-width="1"/></svg></div>
<div class="sbtn" style="left:90px;top:598px"><svg style="left:2px;top:4px" width="9" height="7"><path d="M1 1.5 L4.5 5 L8 1.5" fill="none" stroke="#4d6185" stroke-width="2"/></svg></div>
<div style="left:106px;top:0;width:6px;height:616px;background:linear-gradient(90deg,#fffffa,#f0eee2 30%,#e4e0d0)"></div>
<div style="left:112px;top:0;width:240px;height:616px;background:#fff;border-left:1px solid #000;overflow:hidden"><svg style="left:0;top:0" width="240" height="616" viewBox="756 104 240 616"><defs></defs><defs><clipPath id="cAll"><path d="M775.0,276 L775.0,548 A99.5,71.0 0 0,0 974.0,548 L974.0,276 Z"/><path d="M775.0,276 A99.5,72.5 0 1,0 974.0,276 A99.5,72.5 0 1,0 775.0,276 Z"/></clipPath><clipPath id="cHole"><path d="M797.5,272.5 A77,56.5 0 1,0 951.5,272.5 A77,56.5 0 1,0 797.5,272.5 Z"/></clipPath><filter id="cmap" filterUnits="userSpaceOnUse" x="756" y="104" width="240" height="616" color-interpolation-filters="sRGB"><feTurbulence type="fractalNoise" baseFrequency="0.07" numOctaves="2" seed="11" result="n"/><feColorMatrix in="n" type="matrix" values="1 0 0 0 0  1 0 0 0 0  1 0 0 0 0  0 0 0 0 1" result="ng"/><feComposite in="SourceGraphic" in2="ng" operator="arithmetic" k1="0.45" k2="0.775" k3="0" k4="0" result="mm"/><feComponentTransfer in="mm"><feFuncR type="table" tableValues="0.188 0.188 0.188 0.188 0.188 0.188 0.188 0.188 0.190 0.225 0.261 0.297 0.284 0.270 0.256 0.321 0.434 0.546 0.658 0.618 0.577 0.536 0.501 0.466 0.430 0.395 0.379 0.383 0.388 0.393 0.397 0.434 0.511 0.589 0.669 0.782 0.894 0.941 0.941 0.941 0.941 0.934 0.927 0.920 0.913 0.905 0.896 0.886 0.877 0.868 0.864 0.868 0.871 0.874 0.878 0.823 0.748 0.672 0.604 0.604 0.604"/><feFuncG type="table" tableValues="0.173 0.173 0.173 0.175 0.178 0.180 0.183 0.186 0.191 0.247 0.303 0.359 0.456 0.555 0.653 0.714 0.753 0.792 0.831 0.806 0.780 0.755 0.746 0.739 0.732 0.725 0.723 0.726 0.729 0.732 0.736 0.748 0.771 0.794 0.819 0.857 0.894 0.864 0.787 0.709 0.631 0.574 0.517 0.461 0.405 0.358 0.321 0.283 0.246 0.208 0.188 0.188 0.188 0.188 0.188 0.229 0.285 0.342 0.392 0.392 0.392"/><feFuncB type="table" tableValues="0.549 0.549 0.549 0.551 0.553 0.555 0.557 0.559 0.563 0.605 0.647 0.689 0.754 0.820 0.885 0.894 0.868 0.842 0.816 0.744 0.673 0.601 0.531 0.461 0.390 0.320 0.282 0.282 0.282 0.282 0.282 0.278 0.269 0.259 0.242 0.142 0.042 0.010 0.027 0.045 0.062 0.076 0.090 0.104 0.118 0.132 0.144 0.157 0.169 0.182 0.224 0.300 0.376 0.452 0.528 0.568 0.594 0.620 0.643 0.643 0.643"/><feFuncA type="identity"/></feComponentTransfer></filter><filter id="cmap2" filterUnits="userSpaceOnUse" x="756" y="104" width="240" height="616" color-interpolation-filters="sRGB"><feTurbulence type="fractalNoise" baseFrequency="0.05" numOctaves="2" seed="5" result="n"/><feColorMatrix in="n" type="matrix" values="1 0 0 0 0  1 0 0 0 0  1 0 0 0 0  0 0 0 0 1" result="ng"/><feComposite in="SourceGraphic" in2="ng" operator="arithmetic" k1="0.35" k2="0.825" k3="0" k4="0" result="mm"/><feComponentTransfer in="mm"><feFuncR type="table" tableValues="0.188 0.188 0.188 0.188 0.188 0.188 0.188 0.188 0.190 0.225 0.261 0.297 0.284 0.270 0.256 0.321 0.434 0.546 0.658 0.618 0.577 0.536 0.501 0.466 0.430 0.395 0.379 0.383 0.388 0.393 0.397 0.434 0.511 0.589 0.669 0.782 0.894 0.941 0.941 0.941 0.941 0.934 0.927 0.920 0.913 0.905 0.896 0.886 0.877 0.868 0.864 0.868 0.871 0.874 0.878 0.823 0.748 0.672 0.604 0.604 0.604"/><feFuncG type="table" tableValues="0.173 0.173 0.173 0.175 0.178 0.180 0.183 0.186 0.191 0.247 0.303 0.359 0.456 0.555 0.653 0.714 0.753 0.792 0.831 0.806 0.780 0.755 0.746 0.739 0.732 0.725 0.723 0.726 0.729 0.732 0.736 0.748 0.771 0.794 0.819 0.857 0.894 0.864 0.787 0.709 0.631 0.574 0.517 0.461 0.405 0.358 0.321 0.283 0.246 0.208 0.188 0.188 0.188 0.188 0.188 0.229 0.285 0.342 0.392 0.392 0.392"/><feFuncB type="table" tableValues="0.549 0.549 0.549 0.551 0.553 0.555 0.557 0.559 0.563 0.605 0.647 0.689 0.754 0.820 0.885 0.894 0.868 0.842 0.816 0.744 0.673 0.601 0.531 0.461 0.390 0.320 0.282 0.282 0.282 0.282 0.282 0.278 0.269 0.259 0.242 0.142 0.042 0.010 0.027 0.045 0.062 0.076 0.090 0.104 0.118 0.132 0.144 0.157 0.169 0.182 0.224 0.300 0.376 0.452 0.528 0.568 0.594 0.620 0.643 0.643 0.643"/><feFuncA type="identity"/></feComponentTransfer></filter><filter id="cb3" x="-50%" y="-50%" width="200%" height="200%"><feGaussianBlur stdDeviation="3"/></filter><filter id="cb2" x="-50%" y="-50%" width="200%" height="200%"><feGaussianBlur stdDeviation="1.6"/></filter><filter id="cb8" x="-50%" y="-50%" width="200%" height="200%"><feGaussianBlur stdDeviation="9"/></filter><filter id="cb14" x="-50%" y="-50%" width="200%" height="200%"><feGaussianBlur stdDeviation="14"/></filter><linearGradient id="cBase" gradientUnits="userSpaceOnUse" x1="775" y1="0" x2="974" y2="0"><stop offset="0" stop-color="#182470"/><stop offset="0.06" stop-color="#24389a"/><stop offset="0.25" stop-color="#3048a8"/><stop offset="0.45" stop-color="#3c62b8"/><stop offset="0.55" stop-color="#3c60b6"/><stop offset="0.75" stop-color="#3248a6"/><stop offset="0.92" stop-color="#2e349a"/><stop offset="1" stop-color="#1e1c60"/></linearGradient><linearGradient id="cBaseV" x1="0" y1="0" x2="0" y2="1"><stop offset="0" stop-color="#000" stop-opacity="0"/><stop offset="0.7" stop-color="#000" stop-opacity="0"/><stop offset="1" stop-color="#100040" stop-opacity="0.25"/></linearGradient><mask id="cFront" maskUnits="userSpaceOnUse" x="756" y="104" width="240" height="616"><g filter="url(#cb8)"><path d="M800,300 L990,290 L990,470 L955,500 L915,470 L880,430 L845,390 L815,350 Z" fill="#fff"/></g><path d="M775,548 A99.5,71 0 0,0 815,605" fill="none" stroke="#fff" stroke-width="7"/></mask><radialGradient id="cPurp" gradientUnits="userSpaceOnUse" cx="950" cy="560" r="150"><stop offset="0" stop-color="#401a80" stop-opacity="0.45"/><stop offset="0.6" stop-color="#401a80" stop-opacity="0.15"/><stop offset="1" stop-color="#401a80" stop-opacity="0"/></radialGradient><linearGradient id="cShade2" gradientUnits="userSpaceOnUse" x1="775" y1="0" x2="974" y2="0"><stop offset="0" stop-color="#000" stop-opacity="0.25"/><stop offset="0.08" stop-color="#000" stop-opacity="0.05"/><stop offset="0.2" stop-color="#000" stop-opacity="0"/><stop offset="0.85" stop-color="#000" stop-opacity="0"/><stop offset="0.95" stop-color="#000" stop-opacity="0.1"/><stop offset="1" stop-color="#000" stop-opacity="0.35"/></linearGradient><clipPath id="cTopE"><path d="M775.0,276 A99.5,72.5 0 1,0 974.0,276 A99.5,72.5 0 1,0 775.0,276 Z"/></clipPath><radialGradient id="cHoleSh" cx="0.45" cy="0.55" r="0.6"><stop offset="0.6" stop-color="#000" stop-opacity="0"/><stop offset="0.92" stop-color="#000030" stop-opacity="0.35"/><stop offset="1" stop-color="#000" stop-opacity="0.6"/></radialGradient><linearGradient id="cShade" x1="0" y1="0" x2="1" y2="0"><stop offset="0" stop-color="#000020" stop-opacity="0.55"/><stop offset="0.1" stop-color="#000020" stop-opacity="0.2"/><stop offset="0.35" stop-color="#fff" stop-opacity="0.0"/><stop offset="0.5" stop-color="#a0c0ff" stop-opacity="0.12"/><stop offset="0.7" stop-color="#000" stop-opacity="0.04"/><stop offset="0.9" stop-color="#100030" stop-opacity="0.25"/><stop offset="1" stop-color="#000" stop-opacity="0.6"/></linearGradient></defs><g clip-path="url(#cAll)"><rect x="756" y="104" width="240" height="616" fill="url(#cBase)"/><rect x="756" y="104" width="240" height="616" fill="url(#cBaseV)"/><g mask="url(#cFront)"><g filter="url(#cmap)"><rect x="756" y="104" width="240" height="616" fill="rgb(41,41,41)"/><g filter="url(#cb14)"><path d="M828,335 L990,305 L990,445 L950,470 L905,440 L865,395 L835,365 Z" fill="rgb(64,64,64)"/><path d="M845,345 L985,320 L985,390 L935,385 L880,368 Z" fill="rgb(117,117,117)"/></g><g filter="url(#cb8)"><ellipse cx="925" cy="455" rx="40" ry="32" fill="rgb(64,64,64)" transform="rotate(30 925 455)"/><path d="M775,548 A99.5,71 0 0,0 815,605" fill="none" stroke="rgb(107,107,107)" stroke-width="6"/></g></g></g><path d="M775.0,276 L775.0,548 A99.5,71.0 0 0,0 974.0,548 L974.0,276 Z" fill="url(#cPurp)"/><path d="M775.0,276 L775.0,548 A99.5,71.0 0 0,0 974.0,548 L974.0,276 Z" fill="url(#cShade2)"/><g filter="url(#cmap2)"><path d="M775.0,276 A99.5,72.5 0 1,0 974.0,276 A99.5,72.5 0 1,0 775.0,276 Z" fill="rgb(51,51,51)"/><g clip-path="url(#cTopE)"><g filter="url(#cb3)"><path d="M841.5,341.3 L832.6,338.6 L824.1,335.3 L816.2,331.4 L808.8,326.9 L802.0,321.9 L796.0,316.5 L790.8,310.6 L786.4,304.4 L782.9,297.9 L780.3,291.2 L778.7,284.4 L778.0,277.5 L778.3,270.5 L779.5,263.6 L781.7,256.8 L784.9,250.3 L788.9,243.9 L793.8,237.9 L799.4,232.3 L805.9,227.1 L813.0,222.4 L820.7,218.3 L829.0,214.7 L837.7,211.7 L846.8,209.4 L856.2,207.8 L865.8,206.8 L875.4,206.5 L885.0,206.9 L894.6,208.0" fill="none" stroke="rgb(112,112,112)" stroke-width="6"/><path d="M859.3,336.6 L849.4,334.9 L839.8,332.5 L830.8,329.3 L822.2,325.3 L814.5,320.7 L807.5,315.5 L801.4,309.8 L796.3,303.6 L792.3,297.0 L789.4,290.2 L787.6,283.1 L787.0,276.0 L787.6,268.9 L789.4,261.8 L792.3,255.0 L796.3,248.4 L801.4,242.2 L807.5,236.5 L814.5,231.3 L822.2,226.7 L830.8,222.7 L839.8,219.5 L849.4,217.1 L859.3,215.4 L869.4,214.6 L879.6,214.6 L889.7,215.4 L899.6,217.1 L909.2,219.5 L918.2,222.7" fill="none" stroke="rgb(66,66,66)" stroke-width="8"/><path d="M966.6,266.3 L967.4,270.4 L967.9,274.5 L968.0,278.6 L967.8,282.7 L967.2,286.8 L966.3,290.9 L965.0,294.9 L963.4,298.9 L961.5,302.7 L959.2,306.5 L956.7,310.2 L953.8,313.8 L950.6,317.2 L947.2,320.5 L943.4,323.6 L939.5,326.6 L935.2,329.3 L930.8,331.9 L926.1,334.3 L921.2,336.5 L916.2,338.4 L911.0,340.1 L905.7,341.6 L900.3,342.9 L894.7,343.9 L889.1,344.7 L883.5,345.2 L877.8,345.5 L872.1,345.5 L866.4,345.2" fill="none" stroke="rgb(110,110,110)" stroke-width="11"/><path d="M947.7,232.0 L950.8,234.8 L953.7,237.7 L956.4,240.7 L958.8,243.8 L961.1,247.1 L963.0,250.3 L964.8,253.7 L966.3,257.1 L967.6,260.6 L968.5,264.1" fill="none" stroke="rgb(107,107,107)" stroke-width="9"/><path d="M954.8,298.0 L952.3,302.3 L949.3,306.4 L945.8,310.3 L941.9,314.0 L937.5,317.5 L932.8,320.8 L927.7,323.8 L922.3,326.5 L916.6,328.9 L910.6,331.0 L904.4,332.8 L898.1,334.2 L891.5,335.3 L884.9,336.1 L878.2,336.4 L871.5,336.5 L864.8,336.1 L858.2,335.4 L851.7,334.4 L845.3,333.0" fill="none" stroke="rgb(71,71,71)" stroke-width="6"/></g><g filter="url(#cb2)"><ellipse cx="782" cy="262" rx="3.5" ry="10" fill="rgb(255,255,255)" transform="rotate(15 782 262)"/><ellipse cx="798" cy="232" rx="10" ry="3.5" fill="rgb(255,255,255)" transform="rotate(-40 798 232)"/><ellipse cx="827" cy="214" rx="13" ry="3" fill="rgb(255,255,255)" transform="rotate(-20 827 214)"/><ellipse cx="865" cy="206" rx="9" ry="2.5" fill="rgb(242,242,242)" transform="rotate(-5 865 206)"/><ellipse cx="903" cy="207" rx="6" ry="2" fill="rgb(230,230,230)" transform="rotate(5 903 207)"/><ellipse cx="970" cy="275" rx="2.5" ry="9" fill="rgb(255,255,255)"/><ellipse cx="893" cy="342" rx="10" ry="4" fill="rgb(255,255,255)" transform="rotate(-3 893 342)"/><ellipse cx="914" cy="339" rx="5" ry="3.5" fill="rgb(255,255,255)" transform="rotate(-10 914 339)"/><ellipse cx="932" cy="330" rx="9" ry="4" fill="rgb(255,255,255)" transform="rotate(-30 932 330)"/><ellipse cx="948" cy="319" rx="7" ry="3.5" fill="rgb(255,255,255)" transform="rotate(-40 948 319)"/><ellipse cx="961" cy="305" rx="3.5" ry="8" fill="rgb(255,255,255)" transform="rotate(-20 961 305)"/><ellipse cx="858" cy="342" rx="7" ry="2.5" fill="rgb(168,168,168)"/><ellipse cx="834" cy="337" rx="5" ry="3" fill="rgb(128,128,128)"/></g></g></g></g><g clip-path="url(#cHole)"><g filter="url(#cmap2)"><rect x="756" y="104" width="240" height="300" fill="rgb(36,36,36)"/><g filter="url(#cb8)"><ellipse cx="835" cy="282" rx="32" ry="48" fill="rgb(62,62,62)" transform="rotate(20 835 282)"/><ellipse cx="845" cy="250" rx="18" ry="14" fill="rgb(66,66,66)"/><ellipse cx="880" cy="238" rx="20" ry="8" fill="rgb(56,56,56)"/></g></g><path d="M797.5,272.5 A77,56.5 0 1,0 951.5,272.5 A77,56.5 0 1,0 797.5,272.5 Z" fill="url(#cHoleSh)"/></g><path d="M775.0,342.5 L775.0,548 A99.5,71.0 0 0,0 974.0,548 L974.0,276 A99.5,72.5 0 0,1 775.0,276 Z" fill="url(#cShade)"/><path d="M808,605 L838,627 L832,617 Z" fill="#e04020"/><path d="M798,598 L834,624" stroke="#e04020" stroke-width="2"/><path d="M972,514 L982,522" stroke="#e04020" stroke-width="2"/><path d="M872,402 L877,407 M877,402 L872,407" stroke="#a04040" stroke-width="1"/><path d="M782.5,690 L782.5,677" stroke="#283480" stroke-width="1"/><path d="M780.5,684 L782.5,677 L784.0,684" fill="#283480" stroke="#283480" stroke-width="0.8"/><path d="M783.5,670.5 H787.5 L783.5,676.5 H787.5" fill="none" stroke="#283480" stroke-width="0.9"/><path d="M782.5,690 L769.5,698.5" stroke="#d04020" stroke-width="1"/><path d="M770.5,696 L777.5,697 M772.5,693.5 L775.5,699" stroke="#e04020" stroke-width="1.3"/><path d="M782.5,690 L794.5,697.5" stroke="#308030" stroke-width="1"/><path d="M787.5,695 L794.5,697.5 L789.5,693" fill="#40a040" stroke="#40a040" stroke-width="1.2"/><path d="M796.5,691 L798.5,696 M801.0,691 L798.5,696 V700 H796.5" fill="none" stroke="#40a040" stroke-width="0.9"/></svg></div>
</div>
<div style="left:994px;top:103px;width:5px;height:621px;background:linear-gradient(90deg,#3a55a8,#2a3a90 40%,#22307a)"></div>
<div style="left:638px;top:720px;width:361px;height:4px;background:linear-gradient(#3a55a8,#2a3a90 50%,#22307a)"></div>
<div style="left:24px;top:71px;width:615px;height:330px;background:#3356aa;border-radius:7px 7px 0 0;overflow:hidden;border-left:1px solid #5a6aa0"><div class="cap"></div><div class="ic" style="left:6px;top:11px"></div><div class="ct" style="left:25px;top:9px">Карта результатов - Загружение 0</div><div class="tb" style="left:543px;top:6px;width:21px;height:21px"><div style="left:5px;top:12px;width:8px;height:3px;background:#fff"></div></div><div class="tb" style="left:566px;top:6px;width:21px;height:21px"><div style="left:4px;top:3px;width:11px;height:11px;border:1px solid #fff;border-top-width:3px"></div></div><div class="tb close" style="left:589px;top:6px;width:21px;height:21px"><svg style="left:0;top:0" width="19" height="19"><path d="M5.5 5.5 L13.5 13.5 M13.5 5.5 L5.5 13.5" stroke="#fff" stroke-width="2.2" stroke-linecap="square"/></svg></div></div>
<div style="left:29px;top:102px;width:1px;height:290px;background:#90a8c8"></div>
<div style="left:30px;top:102px;width:607px;height:290px;background:#fff;border-top:1px solid #000;border-left:1px solid #000;overflow:hidden">
<div style="left:0;top:0;width:88px;height:289px;background:#fff;overflow:hidden">
<div class="t11" style="left:15px;top:3px;letter-spacing:0.1px">SVM[ МПа]</div>
<div style="left:2px;top:20px;width:86px;height:1px;background:#000"></div>
<div style="left:7px;top:37px;width:31px;height:387px;border:1px solid #000;background:linear-gradient(#9a64a4 0.0%,#e0308c 6.5%,#dc3030 15.0%,#e86020 24.0%,#f0a010 32.0%,#f0e800 38.5%,#a8d040 43.0%,#66bc48 49.0%,#60b848 58.0%,#88c098 66.0%,#a8d4d0 71.5%,#40b0e8 78.0%,#4c5cb0 84.0%,#30308f 89.5%,#302c8c 100.0%)"></div>
<div class="t11" style="left:45px;top:28px">50.73</div>
<div class="t11" style="left:45px;top:46px">48.37</div>
<div class="t11" style="left:48px;top:65px">46</div>
<div class="t11" style="left:45px;top:83px">43.64</div>
<div class="t11" style="left:45px;top:102px">41.27</div>
<div class="t11" style="left:45px;top:120px">38.91</div>
<div class="t11" style="left:45px;top:139px">36.55</div>
<div class="t11" style="left:45px;top:157px">34.18</div>
<div class="t11" style="left:45px;top:175px">31.82</div>
<div class="t11" style="left:45px;top:194px">29.45</div>
<div class="t11" style="left:45px;top:221px">26.03</div>
<div class="t11" style="left:45px;top:247px">22.6</div>
<div class="t11" style="left:45px;top:266px">20.24</div>
<div class="t11" style="left:45px;top:284px">17.87</div>
<div class="t11" style="left:45px;top:303px">15.51</div>
<div class="t11" style="left:45px;top:321px">13.15</div>
<div class="t11" style="left:45px;top:340px">10.78</div>
<div class="t11" style="left:45px;top:358px">8.418</div>
<div class="t11" style="left:45px;top:376px">6.053</div>
<div class="t11" style="left:45px;top:395px">3.689</div>
<div class="t11" style="left:45px;top:413px">1.325</div>
</div>
<div style="left:88px;top:0;width:18px;height:289px;background:#fbfbf8;border-left:1px solid #a0a0a0"></div>
<div class="sbtn" style="left:90px;top:1px"><svg style="left:2px;top:3px" width="9" height="7"><path d="M1 5.5 L4.5 2 L8 5.5" fill="none" stroke="#4d6185" stroke-width="2"/></svg></div>
<div class="sbtn" style="left:90px;top:17px;background:linear-gradient(90deg,#c6cff0,#bcc6ec)"><svg style="left:3px;top:3px" width="8" height="8"><path d="M0 1.5 H7 M0 3.5 H7 M0 5.5 H7 M0 7.5 H7" stroke="#eef2fc" stroke-width="1"/></svg></div>
<div class="sbtn" style="left:90px;top:272px"><svg style="left:2px;top:4px" width="9" height="7"><path d="M1 1.5 L4.5 5 L8 1.5" fill="none" stroke="#4d6185" stroke-width="2"/></svg></div>
<div style="left:106px;top:0;width:7px;height:289px;background:linear-gradient(90deg,#fffffa,#f0eee2 30%,#e4e0d0)"></div>
<div style="left:113px;top:0;width:494px;height:289px;background:#fff;border-left:1px solid #000;overflow:hidden"><svg style="left:0;top:0" width="493" height="289" viewBox="145 103 493 289"><defs></defs><defs><clipPath id="rOut"><path d="M200,247.5 A190,134 0 1,0 580,247.5 A190,134 0 1,0 200,247.5 Z"/></clipPath><clipPath id="rIn"><path d="M223,256 A170,116 0 1,0 563,256 A170,116 0 1,0 223,256 Z"/></clipPath><filter id="rmap" filterUnits="userSpaceOnUse" x="145" y="103" width="493" height="289" color-interpolation-filters="sRGB"><feTurbulence type="fractalNoise" baseFrequency="0.06" numOctaves="3" seed="3" result="n"/><feColorMatrix in="n" type="matrix" values="1 0 0 0 0  1 0 0 0 0  1 0 0 0 0  0 0 0 0 1" result="ng"/><feComposite in="SourceGraphic" in2="ng" operator="arithmetic" k1="0" k2="1" k3="0.1" k4="-0.05" result="m"/><feComponentTransfer in="m"><feFuncR type="table" tableValues="0.188 0.188 0.188 0.188 0.188 0.188 0.188 0.188 0.190 0.225 0.261 0.297 0.284 0.270 0.256 0.321 0.434 0.546 0.658 0.618 0.577 0.536 0.501 0.466 0.430 0.395 0.379 0.383 0.388 0.393 0.397 0.434 0.511 0.589 0.669 0.782 0.894 0.941 0.941 0.941 0.941 0.934 0.927 0.920 0.913 0.905 0.896 0.886 0.877 0.868 0.864 0.868 0.871 0.874 0.878 0.823 0.748 0.672 0.604 0.604 0.604"/><feFuncG type="table" tableValues="0.173 0.173 0.173 0.175 0.178 0.180 0.183 0.186 0.191 0.247 0.303 0.359 0.456 0.555 0.653 0.714 0.753 0.792 0.831 0.806 0.780 0.755 0.746 0.739 0.732 0.725 0.723 0.726 0.729 0.732 0.736 0.748 0.771 0.794 0.819 0.857 0.894 0.864 0.787 0.709 0.631 0.574 0.517 0.461 0.405 0.358 0.321 0.283 0.246 0.208 0.188 0.188 0.188 0.188 0.188 0.229 0.285 0.342 0.392 0.392 0.392"/><feFuncB type="table" tableValues="0.549 0.549 0.549 0.551 0.553 0.555 0.557 0.559 0.563 0.605 0.647 0.689 0.754 0.820 0.885 0.894 0.868 0.842 0.816 0.744 0.673 0.601 0.531 0.461 0.390 0.320 0.282 0.282 0.282 0.282 0.282 0.278 0.269 0.259 0.242 0.142 0.042 0.010 0.027 0.045 0.062 0.076 0.090 0.104 0.118 0.132 0.144 0.157 0.169 0.182 0.224 0.300 0.376 0.452 0.528 0.568 0.594 0.620 0.643 0.643 0.643"/><feFuncA type="identity"/></feComponentTransfer></filter><filter id="rb4" x="-50%" y="-50%" width="200%" height="200%"><feGaussianBlur stdDeviation="4"/></filter><filter id="rb2" x="-50%" y="-50%" width="200%" height="200%"><feGaussianBlur stdDeviation="3.3"/></filter><filter id="rb6" x="-50%" y="-50%" width="200%" height="200%"><feGaussianBlur stdDeviation="6"/></filter><linearGradient id="rFadeG" x1="0" y1="0" x2="0" y2="1"><stop offset="0" stop-color="#fff"/><stop offset="0.6" stop-color="#fff"/><stop offset="1" stop-color="#000"/></linearGradient><mask id="rWallFade" maskUnits="userSpaceOnUse" x="145" y="103" width="493" height="289"><rect x="145" y="136" width="493" height="120" fill="url(#rFadeG)"/></mask><linearGradient id="rWall" x1="0" y1="0" x2="1" y2="0"><stop offset="0" stop-color="#100008" stop-opacity="0.6"/><stop offset="0.1" stop-color="#300830" stop-opacity="0.35"/><stop offset="0.25" stop-color="#000" stop-opacity="0.05"/><stop offset="0.7" stop-color="#000" stop-opacity="0.1"/><stop offset="0.75" stop-color="#004838" stop-opacity="0.3"/><stop offset="0.9" stop-color="#003828" stop-opacity="0.55"/><stop offset="1" stop-color="#001808" stop-opacity="0.7"/></linearGradient></defs><g clip-path="url(#rOut)"><g filter="url(#rmap)"><rect x="145" y="103" width="493" height="289" fill="rgb(117,117,117)"/><g filter="url(#rb4)"><path d="M230.5,199.9 L234.6,194.2 L239.1,188.7 L244.1,183.3 L249.4,178.1 L255.2,173.1 L261.3,168.3 L267.7,163.7 L274.5,159.4 L281.6,155.4 L289.1,151.6 L296.7,148.0 L304.7,144.8 L312.8,141.8 L321.2,139.2 L329.8,136.9 L338.5,134.8 L347.4,133.1 L356.4,131.7 L365.5,130.7 L374.7,130.0 L383.9,129.6 L393.1,129.5 L402.3,129.8 L411.4,130.4 L420.6,131.4 L429.6,132.6 L438.5,134.2 L447.3,136.1 L455.9,138.4 L464.4,140.9" fill="none" stroke="rgb(143,143,143)" stroke-width="12"/></g><g filter="url(#rb2)"><path d="M208.3,218.1 L209.5,214.6 L210.9,211.2 L212.4,207.7 L214.0,204.3 L215.8,200.9 L217.7,197.6 L219.7,194.2 L221.9,191.0 L224.2,187.7 L226.6,184.6 L229.2,181.4 L231.8,178.3" fill="none" stroke="rgb(255,255,255)" stroke-width="13" stroke-linecap="round"/><path d="M229.4,182.8 L235.3,176.0 L241.9,169.6 L248.9,163.4 L256.6,157.5 L264.7,152.0 L273.3,146.9 L282.3,142.1 L291.7,137.7 L301.5,133.7 L311.6,130.1 L322.0,127.0 L332.7,124.3" fill="none" stroke="rgb(255,255,255)" stroke-width="15" stroke-linecap="round"/><path d="M326.0,124.4 L331.2,123.1 L336.4,122.0 L341.6,121.0 L346.9,120.0 L352.2,119.2 L357.5,118.5 L362.9,117.9 L368.3,117.4 L373.7,117.0 L379.1,116.7 L384.6,116.6 L390.0,116.5" fill="none" stroke="rgb(255,255,255)" stroke-width="12" stroke-linecap="round"/><path d="M390.0,115.5 L393.8,115.5 L397.7,115.6 L401.5,115.7 L405.3,115.9 L409.1,116.2 L412.9,116.5 L416.7,116.8 L420.5,117.2 L424.3,117.7 L428.0,118.2 L431.8,118.8 L435.5,119.4" fill="none" stroke="rgb(242,242,242)" stroke-width="10" stroke-linecap="round"/><path d="M435.6,118.9 L439.8,119.7 L444.1,120.6 L448.2,121.5 L452.4,122.5 L456.5,123.5 L460.6,124.6 L464.7,125.8 L468.7,127.1 L472.6,128.4 L476.6,129.8 L480.4,131.2 L484.2,132.8" fill="none" stroke="rgb(199,199,199)" stroke-width="9" stroke-linecap="round"/><path d="M484.5,132.3 L488.8,134.1 L492.9,136.0 L497.1,137.9 L501.1,139.9 L505.1,142.0 L508.9,144.1 L512.7,146.4 L516.5,148.7 L520.1,151.0 L523.6,153.5 L527.1,155.9 L530.5,158.5" fill="none" stroke="rgb(173,173,173)" stroke-width="8" stroke-linecap="round"/><path d="M217.1,296.4 L213.5,289.6 L210.4,282.7 L207.9,275.7 L206.0,268.7 L204.6,261.5 L203.8,254.3 L203.5,247.1 L203.8,239.9 L204.7,232.7 L206.1,225.6 L208.2,218.5 L210.7,211.5" fill="none" stroke="rgb(204,204,204)" stroke-width="13" stroke-linecap="round"/><path d="M229.9,222.3 L231.3,219.4 L232.7,216.5 L234.3,213.7 L236.0,210.9 L237.8,208.1 L239.7,205.4 L241.7,202.6 L243.8,200.0 L246.1,197.3 L248.5,194.7 L250.9,192.2 L253.5,189.7" fill="none" stroke="rgb(255,255,255)" stroke-width="11" stroke-linecap="round"/><path d="M250.3,192.9 L255.3,188.0 L260.8,183.3 L266.6,178.9 L272.8,174.6 L279.3,170.6 L286.2,166.8 L293.3,163.3 L300.7,160.0 L308.4,157.0 L316.3,154.2 L324.4,151.8 L332.7,149.6" fill="none" stroke="rgb(255,255,255)" stroke-width="14" stroke-linecap="round"/><path d="M327.3,151.0 L332.7,149.6 L338.2,148.4 L343.7,147.2 L349.3,146.3 L355.0,145.4 L360.7,144.7 L366.4,144.1 L372.1,143.6 L377.9,143.3 L383.7,143.1 L389.5,143.0 L395.3,143.1" fill="none" stroke="rgb(255,255,255)" stroke-width="13" stroke-linecap="round"/><path d="M395.3,143.1 L398.2,143.2 L401.1,143.3 L404.0,143.4 L406.9,143.6 L409.7,143.8 L412.6,144.1 L415.5,144.3 L418.3,144.7 L421.2,145.0 L424.0,145.4 L426.8,145.8 L429.7,146.3" fill="none" stroke="rgb(255,255,255)" stroke-width="11" stroke-linecap="round"/><path d="M429.7,146.3 L432.5,146.7 L435.3,147.2 L438.0,147.8 L440.8,148.4 L443.5,149.0 L446.3,149.6 L449.0,150.3 L451.7,151.0 L454.4,151.7 L457.0,152.5 L459.7,153.3 L462.3,154.1" fill="none" stroke="rgb(204,204,204)" stroke-width="9" stroke-linecap="round"/><path d="M462.3,154.1 L465.3,155.1 L468.3,156.1 L471.2,157.2 L474.2,158.3 L477.1,159.5 L479.9,160.7 L482.7,161.9 L485.5,163.2 L488.2,164.5 L490.9,165.8 L493.6,167.2 L496.2,168.6" fill="none" stroke="rgb(168,168,168)" stroke-width="7" stroke-linecap="round"/></g><g filter="url(#rb4)"><path d="M561.0,290.6 L557.5,296.7 L553.6,302.7 L549.2,308.6 L544.3,314.3 L539.1,319.8 L533.4,325.1 L527.4,330.2 L520.9,335.0 L514.1,339.7 L507.0,344.0 L499.5,348.1 L491.8,352.0 L483.7,355.5 L475.4,358.8 L466.9,361.7 L458.2,364.3 L449.3,366.6 L440.2,368.6 L430.9,370.3 L421.6,371.6" fill="none" stroke="rgb(168,168,168)" stroke-width="14"/><ellipse cx="478" cy="368" rx="16" ry="6" fill="rgb(194,194,194)" transform="rotate(-12 478 368)"/><ellipse cx="540" cy="330" rx="10" ry="15" fill="rgb(194,194,194)" transform="rotate(40 540 330)"/><ellipse cx="572" cy="285" rx="5" ry="12" fill="rgb(191,191,191)"/></g><g filter="url(#rb6)"><ellipse cx="335" cy="364" rx="34" ry="9" fill="rgb(64,64,64)" transform="rotate(10 335 364)"/><ellipse cx="265" cy="330" rx="22" ry="13" fill="rgb(71,71,71)" transform="rotate(45 265 330)"/><ellipse cx="475" cy="148" rx="32" ry="11" fill="rgb(76,76,76)" transform="rotate(15 475 148)"/><ellipse cx="530" cy="178" rx="16" ry="13" fill="rgb(66,66,66)" transform="rotate(40 530 178)"/><ellipse cx="560" cy="215" rx="10" ry="26" fill="rgb(76,76,76)" transform="rotate(-25 560 215)"/><ellipse cx="420" cy="372" rx="20" ry="6" fill="rgb(92,92,92)"/><path d="M323.3,362.5 L314.3,359.7 L305.5,356.6 L297.0,353.2 L288.8,349.5 L280.8,345.4 L273.2,341.1 L266.0,336.4 L259.1,331.5 L252.7,326.4 L246.6,321.0 L241.0,315.3 L235.8,309.5" fill="none" stroke="rgb(66,66,66)" stroke-width="14"/><path d="M374.3,372.0 L367.7,371.5 L361.1,370.9 L354.5,370.0 L348.0,369.0 L341.5,367.9 L335.1,366.5 L328.8,365.1 L322.6,363.4" fill="none" stroke="rgb(64,64,64)" stroke-width="10"/></g><g filter="url(#rb2)"><ellipse cx="310" cy="373" rx="6" ry="4" fill="rgb(36,36,36)"/><ellipse cx="470" cy="150" rx="7" ry="4" fill="rgb(56,56,56)" transform="rotate(15 470 150)"/><ellipse cx="510" cy="175" rx="6" ry="6" fill="rgb(51,51,51)"/><ellipse cx="540" cy="180" rx="4" ry="4" fill="rgb(199,199,199)"/><ellipse cx="495" cy="160" rx="3" ry="3" fill="rgb(199,199,199)"/></g></g></g><g clip-path="url(#rIn)"><path d="M212,256 A178,120 0 0,1 568,256 Z" fill="url(#rWall)" mask="url(#rWallFade)"/></g><path d="M226.5,256.5 A162.75,106.2 0 1,0 552.0,256.5 A162.75,106.2 0 1,0 226.5,256.5 Z" fill="#fff"/><path d="M170.5,363 L170.5,350" stroke="#283480" stroke-width="1"/><path d="M168.5,357 L170.5,350 L172.0,357" fill="#283480" stroke="#283480" stroke-width="0.8"/><path d="M171.5,343.5 H175.5 L171.5,349.5 H175.5" fill="none" stroke="#283480" stroke-width="0.9"/><path d="M170.5,363 L157.5,371.5" stroke="#d04020" stroke-width="1"/><path d="M158.5,369 L165.5,370 M160.5,366.5 L163.5,372" stroke="#e04020" stroke-width="1.3"/><path d="M170.5,363 L182.5,370.5" stroke="#308030" stroke-width="1"/><path d="M175.5,368 L182.5,370.5 L177.5,366" fill="#40a040" stroke="#40a040" stroke-width="1.2"/><path d="M184.5,364 L186.5,369 M189.0,364 L186.5,369 V373 H184.5" fill="none" stroke="#40a040" stroke-width="0.9"/></svg></div>
</div>
<div style="left:24px;top:392px;width:617px;height:332px;background:#3356aa;border-radius:7px 7px 0 0;overflow:hidden;border-left:1px solid #5a6aa0"><div class="cap"></div><div class="ic" style="left:6px;top:10px"></div><div class="ct" style="left:25px;top:9px">Карта результатов - Загружение 0</div><div class="tb" style="left:544px;top:5px;width:21px;height:21px"><div style="left:5px;top:12px;width:8px;height:3px;background:#fff"></div></div><div class="tb" style="left:567px;top:5px;width:21px;height:21px"><div style="left:4px;top:3px;width:11px;height:11px;border:1px solid #fff;border-top-width:3px"></div></div><div class="tb close" style="left:590px;top:5px;width:21px;height:21px"><svg style="left:0;top:0" width="19" height="19"><path d="M5.5 5.5 L13.5 13.5 M13.5 5.5 L5.5 13.5" stroke="#fff" stroke-width="2.2" stroke-linecap="square"/></svg></div></div>
<div style="left:29px;top:423px;width:1px;height:298px;background:#90a8c8"></div>
<div style="left:30px;top:423px;width:607px;height:298px;background:#fff;border-top:1px solid #000;border-left:1px solid #000;overflow:hidden">
<div style="left:0;top:0;width:88px;height:297px;background:#fff;overflow:hidden">
<div class="t11" style="left:15px;top:4px;letter-spacing:0.1px">SVM[ МПа]</div>
<div style="left:2px;top:21px;width:86px;height:1px;background:#000"></div>
<div style="left:7px;top:38px;width:31px;height:387px;border:1px solid #000;background:linear-gradient(#9a64a4 0.0%,#e0308c 6.5%,#dc3030 15.0%,#e86020 24.0%,#f0a010 32.0%,#f0e800 38.5%,#a8d040 43.0%,#66bc48 49.0%,#60b848 58.0%,#88c098 66.0%,#a8d4d0 71.5%,#40b0e8 78.0%,#4c5cb0 84.0%,#30308f 89.5%,#302c8c 100.0%)"></div>
<div class="t11" style="left:45px;top:29px">71.02</div>
<div class="t11" style="left:45px;top:48px">67.67</div>
<div class="t11" style="left:45px;top:67px">64.31</div>
<div class="t11" style="left:45px;top:86px">60.95</div>
<div class="t11" style="left:45px;top:105px">57.6</div>
<div class="t11" style="left:45px;top:124px">54.24</div>
<div class="t11" style="left:45px;top:143px">50.89</div>
<div class="t11" style="left:45px;top:162px">47.53</div>
<div class="t11" style="left:45px;top:181px">44.17</div>
<div class="t11" style="left:45px;top:200px">40.82</div>
<div class="t11" style="left:45px;top:228px">35.95</div>
<div class="t11" style="left:45px;top:255px">31.09</div>
<div class="t11" style="left:45px;top:274px">27.74</div>
<div class="t11" style="left:45px;top:294px">24.38</div>
</div>
<div style="left:88px;top:0;width:18px;height:297px;background:#fbfbf8;border-left:1px solid #a0a0a0"></div>
<div class="sbtn" style="left:90px;top:1px"><svg style="left:2px;top:3px" width="9" height="7"><path d="M1 5.5 L4.5 2 L8 5.5" fill="none" stroke="#4d6185" stroke-width="2"/></svg></div>
<div class="sbtn" style="left:90px;top:17px;background:linear-gradient(90deg,#c6cff0,#bcc6ec)"><svg style="left:3px;top:3px" width="8" height="8"><path d="M0 1.5 H7 M0 3.5 H7 M0 5.5 H7 M0 7.5 H7" stroke="#eef2fc" stroke-width="1"/></svg></div>
<div class="sbtn" style="left:90px;top:281px"><svg style="left:2px;top:4px" width="9" height="7"><path d="M1 1.5 L4.5 5 L8 1.5" fill="none" stroke="#4d6185" stroke-width="2"/></svg></div>
<div style="left:106px;top:0;width:7px;height:297px;background:linear-gradient(90deg,#fffffa,#f0eee2 30%,#e4e0d0)"></div>
<div style="left:113px;top:0;width:494px;height:297px;background:#fff;border-left:1px solid #000;overflow:hidden"><svg style="left:0;top:0" width="493" height="297" viewBox="145 424 493 297"><defs></defs><defs><clipPath id="dTop"><path d="M210,567.5 A180,132.5 0 1,0 570,567.5 A180,132.5 0 1,0 210,567.5 Z"/></clipPath><clipPath id="dHin"><path d="M330,569.5 A60,44 0 1,0 450,569.5 A60,44 0 1,0 330,569.5 Z"/></clipPath><filter id="dmap" filterUnits="userSpaceOnUse" x="145" y="424" width="493" height="297" color-interpolation-filters="sRGB"><feTurbulence type="fractalNoise" baseFrequency="0.07" numOctaves="1" seed="7" result="n"/><feColorMatrix in="n" type="matrix" values="1 0 0 0 0  1 0 0 0 0  1 0 0 0 0  0 0 0 0 1" result="ng"/><feComposite in="SourceGraphic" in2="ng" operator="arithmetic" k1="1.25" k2="0.375" k3="0" k4="0" result="mm"/><feComponentTransfer in="mm"><feFuncR type="table" tableValues="0.188 0.188 0.188 0.188 0.188 0.188 0.188 0.188 0.190 0.225 0.261 0.297 0.284 0.270 0.256 0.321 0.434 0.546 0.658 0.618 0.577 0.536 0.501 0.466 0.430 0.395 0.379 0.383 0.388 0.393 0.397 0.434 0.511 0.589 0.669 0.782 0.894 0.941 0.941 0.941 0.941 0.934 0.927 0.920 0.913 0.905 0.896 0.886 0.877 0.868 0.864 0.868 0.871 0.874 0.878 0.823 0.748 0.672 0.604 0.604 0.604"/><feFuncG type="table" tableValues="0.173 0.173 0.173 0.175 0.178 0.180 0.183 0.186 0.191 0.247 0.303 0.359 0.456 0.555 0.653 0.714 0.753 0.792 0.831 0.806 0.780 0.755 0.746 0.739 0.732 0.725 0.723 0.726 0.729 0.732 0.736 0.748 0.771 0.794 0.819 0.857 0.894 0.864 0.787 0.709 0.631 0.574 0.517 0.461 0.405 0.358 0.321 0.283 0.246 0.208 0.188 0.188 0.188 0.188 0.188 0.229 0.285 0.342 0.392 0.392 0.392"/><feFuncB type="table" tableValues="0.549 0.549 0.549 0.551 0.553 0.555 0.557 0.559 0.563 0.605 0.647 0.689 0.754 0.820 0.885 0.894 0.868 0.842 0.816 0.744 0.673 0.601 0.531 0.461 0.390 0.320 0.282 0.282 0.282 0.282 0.282 0.278 0.269 0.259 0.242 0.142 0.042 0.010 0.027 0.045 0.062 0.076 0.090 0.104 0.118 0.132 0.144 0.157 0.169 0.182 0.224 0.300 0.376 0.452 0.528 0.568 0.594 0.620 0.643 0.643 0.643"/><feFuncA type="identity"/></feComponentTransfer></filter><filter id="db5" x="-50%" y="-50%" width="200%" height="200%"><feGaussianBlur stdDeviation="5"/></filter><filter id="db3" x="-50%" y="-50%" width="200%" height="200%"><feGaussianBlur stdDeviation="3"/></filter><filter id="db8" x="-50%" y="-50%" width="200%" height="200%"><feGaussianBlur stdDeviation="8"/></filter><filter id="db12" x="-50%" y="-50%" width="200%" height="200%"><feGaussianBlur stdDeviation="22"/></filter><filter id="dmapR" filterUnits="userSpaceOnUse" x="145" y="424" width="493" height="297" color-interpolation-filters="sRGB"><feComponentTransfer in="SourceGraphic"><feFuncR type="table" tableValues="0.188 0.188 0.188 0.188 0.188 0.188 0.188 0.188 0.190 0.225 0.261 0.297 0.284 0.270 0.256 0.321 0.434 0.546 0.658 0.618 0.577 0.536 0.501 0.466 0.430 0.395 0.379 0.383 0.388 0.393 0.397 0.434 0.511 0.589 0.669 0.782 0.894 0.941 0.941 0.941 0.941 0.934 0.927 0.920 0.913 0.905 0.896 0.886 0.877 0.868 0.864 0.868 0.871 0.874 0.878 0.823 0.748 0.672 0.604 0.604 0.604"/><feFuncG type="table" tableValues="0.173 0.173 0.173 0.175 0.178 0.180 0.183 0.186 0.191 0.247 0.303 0.359 0.456 0.555 0.653 0.714 0.753 0.792 0.831 0.806 0.780 0.755 0.746 0.739 0.732 0.725 0.723 0.726 0.729 0.732 0.736 0.748 0.771 0.794 0.819 0.857 0.894 0.864 0.787 0.709 0.631 0.574 0.517 0.461 0.405 0.358 0.321 0.283 0.246 0.208 0.188 0.188 0.188 0.188 0.188 0.229 0.285 0.342 0.392 0.392 0.392"/><feFuncB type="table" tableValues="0.549 0.549 0.549 0.551 0.553 0.555 0.557 0.559 0.563 0.605 0.647 0.689 0.754 0.820 0.885 0.894 0.868 0.842 0.816 0.744 0.673 0.601 0.531 0.461 0.390 0.320 0.282 0.282 0.282 0.282 0.282 0.278 0.269 0.259 0.242 0.142 0.042 0.010 0.027 0.045 0.062 0.076 0.090 0.104 0.118 0.132 0.144 0.157 0.169 0.182 0.224 0.300 0.376 0.452 0.528 0.568 0.594 0.620 0.643 0.643 0.643"/><feFuncA type="identity"/></feComponentTransfer></filter><mask id="dRimM" maskUnits="userSpaceOnUse" x="145" y="424" width="493" height="297"><g filter="url(#db3)"><path d="M238.4,631.2 L231.6,621.7 L225.9,611.8 L221.4,601.6 L218.0,591.1 L215.9,580.5 L215.0,569.7 L215.4,559.0 L217.0,548.3 L219.8,537.7 L223.9,527.4 L229.1,517.3 L235.5,507.6 L243.0,498.4 L251.5,489.6 L261.0,481.4 L271.4,473.7 L282.7,466.8 L294.7,460.6 L307.4,455.1 L320.7,450.4 L334.5,446.6 L348.7,443.6 L363.1,441.5 L377.8,440.3 L392.5,440.0 L407.3,440.6 L421.9,442.1 L436.3,444.5 L450.3,447.8 L464.0,451.9" fill="none" stroke="#fff" stroke-width="16"/></g></mask><linearGradient id="dWall" x1="0" y1="0" x2="1" y2="0"><stop offset="0" stop-color="#0a2a08" stop-opacity="0.7"/><stop offset="0.15" stop-color="#f0a000" stop-opacity="0.35"/><stop offset="0.4" stop-color="#d0c000" stop-opacity="0.25"/><stop offset="0.75" stop-color="#000" stop-opacity="0.05"/><stop offset="1" stop-color="#0a2a08" stop-opacity="0.6"/></linearGradient></defs><path d="M563.8,535.7 L557.7,539.2 L565.5,539.2 L559.3,542.6 L567.1,542.7 L560.7,546.0 L568.5,546.3 L562.0,549.4 L569.8,549.9 L563.1,552.9 L570.9,553.5 L564.2,556.3 L571.9,557.1 L565.1,559.8 L572.8,560.8 L565.8,563.4 L573.5,564.4 L566.5,566.9 L574.1,568.1 L566.9,570.4 L574.5,571.8 L567.3,574.0 L574.8,575.5 L567.5,577.5 L575.0,579.2 L567.6,581.1 L575.0,582.9 L567.5,584.7 L574.9,586.6 L567.4,588.2 L574.6,590.3 L567.0,591.8 L574.2,594.0 L566.6,595.3 L573.6,597.7 L566.0,598.8 L572.9,601.4 L565.2,602.4 L572.1,605.1 L564.4,605.9 L571.1,608.7 L563.4,609.4 L570.0,612.3 L562.3,612.8 L568.8,615.9 L561.0,616.3 L567.4,619.5 L559.6,619.7 L565.9,623.0 L558.1,623.1 L564.2,626.5 L556.4,626.4 L562.4,630.0 L554.6,629.7 L560.5,633.5 L552.7,633.0 L558.5,636.9 L550.7,636.3 L556.3,640.2 L548.6,639.5 L554.0,643.5 L546.3,642.6 L551.6,646.8 L543.9,645.7 L549.0,650.0 L541.4,648.8 L546.3,653.2 L538.7,651.8 L543.5,656.3 L536.0,654.7 L540.6,659.3 L533.1,657.6 L537.6,662.3 L530.2,660.5 L534.4,665.2 L527.1,663.3 L531.2,668.1 L523.9,666.0 L527.8,670.9 L520.7,668.6 L524.4,673.6 L517.3,671.2 L520.8,676.3 L513.8,673.7 L517.1,678.9 L510.2,676.2 L513.3,681.4 L506.6,678.6 L509.5,683.8 L502.8,680.9 L505.5,686.2 L499.0,683.1 L501.5,688.4 L495.1,685.2 L497.4,690.6 L491.0,687.3 L493.1,692.7 L487.0,689.3 L488.9,694.8 L482.8,691.2 L484.5,696.7 L478.6,693.0 L480.1,698.6 L474.3,694.7 L475.5,700.3 L469.9,696.4 L471.0,702.0 L465.5,697.9 L466.3,703.6 L461.0,699.4 L461.6,705.0 L456.5,700.8 L456.9,706.4 L451.9,702.1 L452.1,707.7 L447.3,703.3 L447.3,708.9 L442.6,704.4 L442.4,710.0 L437.9,705.4 L437.4,711.0 L433.2,706.3 L432.5,711.9 L428.4,707.1 L427.5,712.7 L423.6,707.8 L422.4,713.4 L418.7,708.4 L417.4,714.0 L413.9,709.0 L412.3,714.5 L409.0,709.4 L407.2,714.9 L404.1,709.7 L402.1,715.2 L399.2,710.0 L397.0,715.4 L394.3,710.1 L391.9,715.5 L389.4,710.1 L386.8,715.5 L384.4,710.1 L381.7,715.4 L379.5,709.9 L376.5,715.1 L374.6,709.7 L371.4,714.8 L369.7,709.3 L366.4,714.4 L364.9,708.8 L361.3,713.9 L360.0,708.3 L356.2,713.3 L355.2,707.6 L351.2,712.5 L350.4,706.9 L346.2,711.7 L345.6,706.1 L341.3,710.8 L340.9,705.1 L336.4,709.7 L336.2,704.1 L331.5,708.6 L331.5,703.0 L326.6,707.4 L326.9,701.7 L321.9,706.1 L322.3,700.4 L317.1,704.7 L317.8,699.0 L312.4,703.2 L313.3,697.5 L307.8,701.6 L308.9,696.0 L303.3,699.9 L304.6,694.3 L298.8,698.1 L300.3,692.5 L294.4,696.2 L296.1,690.7 L290.0,694.2 L292.0,688.8 L285.7,692.2 L287.9,686.8 L281.6,690.1 L283.9,684.7 L277.5,687.9 L280.0,682.5 L273.4,685.6 L276.2,680.3 L269.5,683.2 L272.5,677.9 L265.7,680.7 L268.8,675.5 L261.9,678.2 L265.3,673.1 L258.3,675.6 L261.8,670.5 L254.7,672.9 L258.5,667.9 L251.3,670.2 L255.2,665.3 L248.0,667.4 L252.1,662.5 L244.7,664.5 L249.0,659.7 L241.6,661.5 L246.1,656.9 L238.6,658.5 L243.3,654.0 L235.7,655.5 L240.6,651.0 L233.0,652.3 L238.0,648.0 L230.3,649.2 L235.5,644.9 L227.8,645.9 L233.1,641.8 L225.4,642.7 L230.9,638.6 L223.1,639.3 L228.8,635.4 L221.0,636.0 L226.8,632.2 L219.0,632.6 L224.9,628.9 L217.1,629.1 L223.1,625.5 L215.3,625.6 L221.5,622.2 L213.7,622.1 L220.0,618.8 L212.2,618.6 L218.7,615.4 L210.9,615.0 L217.4,611.9 L209.7,611.4 L216.3,608.4 L208.6,607.8 L215.4,605.0 L207.7,604.1 L214.5,601.4 L206.9,600.4 L213.9,597.9 L206.2,596.8 L213.3,594.4 L205.7,593.1 L212.9,590.8 L205.3,589.4 L212.6,587.3 L205.1,585.7 L212.4,583.7 L205.0,582.0 L212.4,580.2 L205.1,578.3 L212.5,576.6 L205.2,574.6 L212.8,573.1 L205.6,570.9 L213.2,569.5 L206.1,567.2 L213.7,566.0 L206.7,563.5 L214.4,562.4 L207.4,559.8 L215.2,558.9 L208.3,556.2 L216.1,555.4 L209.4,552.5 L217.1,552.0 L210.6,548.9 L218.3,548.5 L211.9,545.3 L219.7,545.1 L213.3,541.8 L221.1,541.7 L214.9,538.3 L222.7,538.3 L216.6,534.8 L224.4,535.0 L218.5,531.3 L210,547.5 L570,547.5 Z" fill="#8a8a8a"/><g clip-path="url(#dTop)"><g filter="url(#dmap)"><rect x="145" y="424" width="493" height="297" fill="rgb(94,94,94)"/><g filter="url(#db12)"><path d="M496,470 L525,490 L560,520 L590,552 L610,604 L600,690 L520,740 L409,745 L320,735 L280,705 L290,668 L305,652 L335,658 L372,658 L408,646 L442,624 L466,598 L484,562 L492,526 L490,494 Z" fill="rgb(0,0,0)"/><ellipse cx="530" cy="600" rx="32" ry="55" fill="rgb(0,0,0)" transform="rotate(-20 530 600)"/><ellipse cx="440" cy="690" rx="70" ry="20" fill="rgb(0,0,0)" transform="rotate(-5 440 690)"/></g><g filter="url(#db3)"><ellipse cx="470" cy="480" rx="8" ry="10" fill="rgb(51,51,51)"/><ellipse cx="478" cy="510" rx="7" ry="12" fill="rgb(61,61,61)"/><ellipse cx="470" cy="560" rx="8" ry="10" fill="rgb(51,51,51)"/><ellipse cx="452" cy="595" rx="12" ry="7" fill="rgb(51,51,51)" transform="rotate(30 452 595)"/><ellipse cx="420" cy="622" rx="14" ry="6" fill="rgb(56,56,56)" transform="rotate(20 420 622)"/><ellipse cx="385" cy="640" rx="14" ry="6" fill="rgb(56,56,56)"/><ellipse cx="345" cy="648" rx="16" ry="6" fill="rgb(51,51,51)"/><ellipse cx="310" cy="640" rx="12" ry="6" fill="rgb(61,61,61)"/><ellipse cx="275" cy="628" rx="14" ry="10" fill="rgb(51,51,51)"/><ellipse cx="260" cy="610" rx="8" ry="6" fill="rgb(51,51,51)"/><ellipse cx="500" cy="540" rx="8" ry="8" fill="rgb(56,56,56)"/><ellipse cx="510" cy="500" rx="6" ry="8" fill="rgb(51,51,51)"/><ellipse cx="430" cy="600" rx="8" ry="5" fill="rgb(51,51,51)"/></g><g filter="url(#db5)"><ellipse cx="515" cy="505" rx="10" ry="7" fill="rgb(66,66,66)"/><ellipse cx="540" cy="530" rx="7" ry="9" fill="rgb(61,61,61)"/><ellipse cx="505" cy="560" rx="9" ry="6" fill="rgb(61,61,61)"/><ellipse cx="520" cy="600" rx="8" ry="6" fill="rgb(51,51,51)"/><ellipse cx="480" cy="620" rx="12" ry="6" fill="rgb(51,51,51)" transform="rotate(20 480 620)"/><ellipse cx="430" cy="650" rx="14" ry="5" fill="rgb(51,51,51)" transform="rotate(10 430 650)"/><ellipse cx="370" cy="672" rx="16" ry="5" fill="rgb(51,51,51)"/><ellipse cx="330" cy="678" rx="16" ry="5" fill="rgb(56,56,56)"/><ellipse cx="285" cy="665" rx="10" ry="7" fill="rgb(61,61,61)"/><ellipse cx="560" cy="570" rx="7" ry="10" fill="rgb(46,46,46)"/><ellipse cx="545" cy="490" rx="8" ry="6" fill="rgb(66,66,66)"/></g><g filter="url(#db3)"><path d="M374.9,442.5 L387.4,442.0 L400.0,442.2 L412.4,443.1 L424.8,444.6 L437.0,446.7 L448.9,449.5 L460.5,452.9 L471.8,456.9 L482.6,461.5 L492.9,466.6 L502.7,472.3 L511.9,478.4 L520.5,485.1 L528.3,492.1 L535.5,499.6 L541.9,507.4 L547.5,515.6 L552.3,524.0 L556.2,532.6 L559.2,541.4" fill="none" stroke="rgb(102,102,102)" stroke-width="12"/></g><g filter="url(#db5)"><ellipse cx="445" cy="495" rx="10" ry="12" fill="rgb(71,71,71)"/><ellipse cx="420" cy="470" rx="12" ry="8" fill="rgb(76,76,76)"/><ellipse cx="345" cy="600" rx="12" ry="8" fill="rgb(76,76,76)"/><ellipse cx="360" cy="470" rx="30" ry="16" fill="rgb(87,87,87)"/><ellipse cx="300" cy="520" rx="26" ry="20" fill="rgb(87,87,87)"/><ellipse cx="250" cy="580" rx="20" ry="26" fill="rgb(92,92,92)"/><ellipse cx="400" cy="600" rx="20" ry="10" fill="rgb(82,82,82)"/></g><g filter="url(#db3)"><ellipse cx="352" cy="520" rx="16" ry="5" fill="rgb(189,189,189)" transform="rotate(-20 352 520)"/><ellipse cx="340" cy="528" rx="5" ry="10" fill="rgb(178,178,178)"/><ellipse cx="375" cy="518" rx="10" ry="4" fill="rgb(168,168,168)" transform="rotate(-30 375 518)"/><ellipse cx="398" cy="524" rx="14" ry="4" fill="rgb(158,158,158)"/><ellipse cx="425" cy="522" rx="10" ry="4" fill="rgb(153,153,153)" transform="rotate(20 425 522)"/><ellipse cx="322" cy="572" rx="12" ry="5" fill="rgb(178,178,178)" transform="rotate(-50 322 572)"/><ellipse cx="312" cy="585" rx="8" ry="5" fill="rgb(158,158,158)"/><ellipse cx="470" cy="450" rx="40" ry="5" fill="rgb(128,128,128)" transform="rotate(-5 470 450)"/><ellipse cx="380" cy="450" rx="30" ry="5" fill="rgb(133,133,133)"/><ellipse cx="236" cy="528" rx="7" ry="14" fill="rgb(143,143,143)"/><ellipse cx="268" cy="488" rx="14" ry="6" fill="rgb(148,148,148)" transform="rotate(-30 268 488)"/><ellipse cx="300" cy="464" rx="16" ry="5" fill="rgb(148,148,148)" transform="rotate(-15 300 464)"/><ellipse cx="345" cy="450" rx="18" ry="4" fill="rgb(143,143,143)" transform="rotate(-5 345 450)"/><ellipse cx="222" cy="590" rx="5" ry="12" fill="rgb(138,138,138)"/><ellipse cx="335" cy="610" rx="8" ry="4" fill="rgb(148,148,148)"/><ellipse cx="355" cy="495" rx="8" ry="4" fill="rgb(148,148,148)"/></g></g></g><g clip-path="url(#dTop)" mask="url(#dRimM)"><g filter="url(#dmapR)"><rect x="145" y="424" width="493" height="297" fill="rgb(128,128,128)"/><g filter="url(#db3)"><path d="M253.6,651.4 L250.4,648.4 L247.2,645.4 L244.2,642.4 L241.3,639.2 L238.5,636.0 L235.8,632.8 L233.3,629.4 L230.9,626.1 L228.7,622.7 L226.6,619.2 L224.6,615.7 L222.7,612.1" fill="none" stroke="rgb(158,158,158)" stroke-width="6" stroke-linecap="round"/><path d="M225.9,616.0 L224.0,612.5 L222.3,608.9 L220.7,605.4 L219.3,601.7 L218.0,598.1 L216.9,594.4 L215.9,590.7 L215.0,587.0 L214.3,583.3 L213.8,579.5 L213.4,575.8 L213.1,572.0" fill="none" stroke="rgb(189,189,189)" stroke-width="8" stroke-linecap="round"/><path d="M213.9,576.5 L213.6,572.0 L213.5,567.5 L213.6,563.0 L213.9,558.5 L214.5,554.0 L215.2,549.5 L216.2,545.1 L217.4,540.7 L218.7,536.3 L220.3,531.9 L222.1,527.6 L224.1,523.4" fill="none" stroke="rgb(204,204,204)" stroke-width="9" stroke-linecap="round"/><path d="M222.6,527.8 L226.2,520.4 L230.5,513.2 L235.3,506.2 L240.7,499.4 L246.7,492.9 L253.2,486.6 L260.2,480.7 L267.7,475.1 L275.7,469.8 L284.1,464.9 L292.9,460.3 L302.0,456.2" fill="none" stroke="rgb(214,214,214)" stroke-width="10" stroke-linecap="round"/><path d="M296.5,458.1 L301.7,455.8 L307.1,453.6 L312.6,451.6 L318.2,449.7 L323.9,447.9 L329.6,446.3 L335.5,444.8 L341.4,443.5 L347.3,442.3 L353.3,441.3 L359.4,440.5 L365.4,439.8" fill="none" stroke="rgb(204,204,204)" stroke-width="9" stroke-linecap="round"/><path d="M359.2,439.5 L364.3,438.9 L369.4,438.4 L374.5,438.0 L379.7,437.7 L384.8,437.6 L390.0,437.5 L395.2,437.6 L400.3,437.7 L405.5,438.0 L410.6,438.4 L415.7,438.9 L420.8,439.5" fill="none" stroke="rgb(178,178,178)" stroke-width="7" stroke-linecap="round"/><path d="M421.0,438.5 L426.1,439.2 L431.2,440.0 L436.2,441.0 L441.2,442.0 L446.1,443.1 L451.1,444.4 L455.9,445.8 L460.7,447.2 L465.4,448.8 L470.1,450.4 L474.7,452.2 L479.2,454.1" fill="none" stroke="rgb(153,153,153)" stroke-width="5" stroke-linecap="round"/><path d="M228.7,512.3 L232.8,506.2 L237.4,500.3 L242.4,494.5 L247.8,489.0 L253.6,483.6 L259.8,478.5 L266.4,473.6 L273.2,469.0 L280.4,464.7 L287.9,460.6" fill="none" stroke="rgb(255,255,255)" stroke-width="5"/></g></g></g><g clip-path="url(#dHin)"><path d="M330,567.5 A60,46 0 1,0 450,567.5 A60,46 0 1,0 330,567.5 Z" fill="#78c040"/><path d="M330,567.5 A60,44 0 1,0 450,567.5 A60,44 0 1,0 330,567.5 Z" fill="url(#dWall)"/><path d="M330,576.5 A60,44 0 1,0 450,576.5 A60,44 0 1,0 330,576.5 Z" fill="#fff"/></g><path d="M387 681 L392 686 M392 681 L387 686" stroke="#d04040" stroke-width="1"/><path d="M170.5,692 L170.5,679" stroke="#283480" stroke-width="1"/><path d="M168.5,686 L170.5,679 L172.0,686" fill="#283480" stroke="#283480" stroke-width="0.8"/><path d="M171.5,672.5 H175.5 L171.5,678.5 H175.5" fill="none" stroke="#283480" stroke-width="0.9"/><path d="M170.5,692 L157.5,700.5" stroke="#d04020" stroke-width="1"/><path d="M158.5,698 L165.5,699 M160.5,695.5 L163.5,701" stroke="#e04020" stroke-width="1.3"/><path d="M170.5,692 L182.5,699.5" stroke="#308030" stroke-width="1"/><path d="M175.5,697 L182.5,699.5 L177.5,695" fill="#40a040" stroke="#40a040" stroke-width="1.2"/><path d="M184.5,693 L186.5,698 M189.0,693 L186.5,698 V702 H184.5" fill="none" stroke="#40a040" stroke-width="0.9"/></svg></div>
</div>
<div style="left:30px;top:721px;width:608px;height:3px;border-bottom:2px solid #34469a;background:#fff"></div>
<div style="left:0;top:724px;width:1024px;height:20px;background:#ece9d8"></div>
<div class="t11" style="left:24px;top:730px;letter-spacing:0.4px">Готов</div>
<div class="sp" style="left:411px;top:727px;width:12px"></div>
<div class="sp" style="left:425px;top:727px;width:24px"></div>
<div class="sp" style="left:451px;top:727px;width:213px"></div>
<div class="sp" style="left:666px;top:727px;width:170px"></div>
<div class="sp" style="left:839px;top:727px;width:62px"></div>
<div class="sp" style="left:903px;top:727px;width:78px"></div>
<div class="t11" style="left:427px;top:730px">мм</div>
<div class="t11" style="left:452px;top:730px;letter-spacing:0.17px">X = -17.73 Y = -2.50 Z = 14.85</div>
<div class="t11" style="left:840px;top:730px">Выбрать</div>
<div class="t11" style="left:905px;top:730px">тавровое_шов</div>
<svg style="left:985px;top:729px" width="16" height="16" viewBox="0 0 16 16"><path d="M14 3 L3 14 M14 7 L7 14 M14 11 L11 14" stroke="#fff" stroke-width="1"/><path d="M15 3 L4 14 M15 7 L8 14 M15 11 L12 14" stroke="#b8b4a4" stroke-width="1"/></svg>
<div style="left:0;top:744px;width:1024px;height:21px;background:#ece9d8;border-top:1px solid #fff"></div>
<div style="left:0;top:765px;width:1024px;height:3px;background:#3a5cb8"></div>
<div style="left:4px;top:746px;width:3px;height:18px;border-left:1px solid #fff;border-right:1px solid #c0bcae"></div>
<div class="vsep" style="left:79px;top:747px;height:17px"></div>
<div class="vsep" style="left:176px;top:747px;height:17px"></div>
<div class="vsep" style="left:252px;top:747px;height:17px"></div>
<div class="vsep" style="left:326px;top:747px;height:17px"></div>
<div class="vsep" style="left:424px;top:747px;height:17px"></div>
<div class="vsep" style="left:546px;top:747px;height:17px"></div>
<div class="vsep" style="left:622px;top:747px;height:17px"></div>
<div class="vsep" style="left:718px;top:747px;height:17px"></div>
<div class="vsep" style="left:751px;top:747px;height:17px"></div>
<div style="left:962px;top:746px;width:4px;height:18px;border-left:1px solid #c0bcae;border-right:1px solid #c0bcae"></div>
<div style="left:7px;top:745px;width:22px;height:20px;border:1px solid;border-color:#c4c0b0 #fff #fff #c4c0b0;background:#f4f3ec"></div>
<div style="left:82px;top:745px;width:22px;height:20px;border:1px solid;border-color:#c4c0b0 #fff #fff #c4c0b0;background:#f4f3ec"></div>
<div style="left:180px;top:745px;width:22px;height:20px;border:1px solid;border-color:#c4c0b0 #fff #fff #c4c0b0;background:#f4f3ec"></div>
<div style="left:255px;top:745px;width:22px;height:20px;border:1px solid;border-color:#c4c0b0 #fff #fff #c4c0b0;background:#f4f3ec"></div>
<div style="left:331px;top:745px;width:21px;height:20px;border:1px solid;border-color:#c4c0b0 #fff #fff #c4c0b0;background:#f4f3ec"></div>
<div style="left:353px;top:745px;width:22px;height:20px;border:1px solid;border-color:#c4c0b0 #fff #fff #c4c0b0;background:transparent"></div>
<div style="left:376px;top:745px;width:22px;height:20px;border:1px solid;border-color:#c4c0b0 #fff #fff #c4c0b0;background:transparent"></div>
<div style="left:399px;top:745px;width:22px;height:20px;border:1px solid;border-color:#c4c0b0 #fff #fff #c4c0b0;background:transparent"></div>
<div style="left:428px;top:745px;width:22px;height:20px;border:1px solid;border-color:#c4c0b0 #fff #fff #c4c0b0;background:#f4f3ec"></div>
<div style="left:451px;top:745px;width:22px;height:20px;border:1px solid;border-color:#c4c0b0 #fff #fff #c4c0b0;background:transparent"></div>
<div style="left:475px;top:745px;width:21px;height:20px;border:1px solid;border-color:#c4c0b0 #fff #fff #c4c0b0;background:transparent"></div>
<div style="left:625px;top:745px;width:21px;height:20px;border:1px solid;border-color:#c4c0b0 #fff #fff #c4c0b0;background:transparent"></div>
<div style="left:647px;top:745px;width:22px;height:20px;border:1px solid;border-color:#c4c0b0 #fff #fff #c4c0b0;background:transparent"></div>
<div style="left:670px;top:745px;width:22px;height:20px;border:1px solid;border-color:#c4c0b0 #fff #fff #c4c0b0;background:transparent"></div>
<div style="left:693px;top:745px;width:22px;height:20px;border:1px solid;border-color:#c4c0b0 #fff #fff #c4c0b0;background:transparent"></div>
<div style="left:1016px;top:745px;width:8px;height:20px;border:1px solid;border-color:#c4c0b0 #fff #fff #c4c0b0;background:transparent"></div>
<svg style="left:10px;top:747px" width="16" height="16" viewBox="0 0 16 16"><rect x="5.5" y="5.5" width="6" height="6" fill="#d04020" stroke="#000" stroke-width="1.6"/></svg>
<svg style="left:32px;top:747px" width="16" height="16" viewBox="0 0 16 16"><rect x="1" y="10" width="5" height="5" fill="#9d9a8d"/><path d="M8 9 V2 L13 9 V2" fill="none" stroke="#9d9a8d" stroke-width="1.3"/></svg>
<svg style="left:58px;top:747px" width="16" height="16" viewBox="0 0 16 16"><path d="M7 1 V10 M7 10 H15 M7 10 L3 14" fill="none" stroke="#9d9a8d" stroke-width="1.2"/><rect x="5" y="8" width="4" height="4" fill="none" stroke="#9d9a8d"/><path d="M12 8 L15 10 L12 12" fill="none" stroke="#9d9a8d"/></svg>
<svg style="left:86px;top:747px" width="16" height="16" viewBox="0 0 16 16"><rect x="1.5" y="2.5" width="12" height="11" fill="#a8dcdc" stroke="#207870" stroke-width="1.5"/></svg>
<svg style="left:108px;top:747px" width="16" height="16" viewBox="0 0 16 16"><rect x="1.5" y="4.5" width="11" height="10" fill="none" stroke="#207870" stroke-width="1.5"/><path d="M1.5 4.5 L4 1.5 H15 V12 L12.5 14.5 M4 1.5 V4.5 M15 1.5 L12.5 4.5" fill="none" stroke="#207870" stroke-width="1.5"/><rect x="3" y="6" width="8" height="7" fill="#ece9d8"/></svg>
<svg style="left:131px;top:747px" width="16" height="16" viewBox="0 0 16 16"><path d="M1.5 4.5 H12.5 V14.5 H1.5 Z" fill="#a8dcdc" stroke="#207870" stroke-width="1.5"/><path d="M1.5 4.5 L4.5 1.5 H15 V11.5 L12.5 14.5 M12.5 4.5 L15 1.5" fill="#a8dcdc" stroke="#207870" stroke-width="1.5"/></svg>
<svg style="left:153px;top:747px" width="16" height="16" viewBox="0 0 16 16"><path d="M1 14 L6 9 H15 L10 14 Z" fill="#a8dcdc" stroke="#207870" stroke-width="1.3"/><path d="M8 1 V14 M4 12 L12 12" stroke="#e04040" stroke-width="1"/></svg>
<svg style="left:183px;top:747px" width="16" height="16" viewBox="0 0 16 16"><path d="M4 12 L12 4" stroke="#000" stroke-width="1"/><rect x="1.5" y="10.5" width="4" height="4" fill="#fff" stroke="#000" stroke-width="1.5"/><rect x="10.5" y="1.5" width="4" height="4" fill="#fff" stroke="#000" stroke-width="1.5"/></svg>
<svg style="left:205px;top:747px" width="16" height="16" viewBox="0 0 16 16"><path d="M3 11 L11 2 M6 13 L14 4 M2 11 V14 H5" fill="none" stroke="#000" stroke-width="1.3"/><rect x="1.5" y="10.5" width="4" height="4" fill="#fff" stroke="#000" stroke-width="1.5"/></svg>
<svg style="left:229px;top:747px" width="16" height="16" viewBox="0 0 16 16"><path d="M3 11 L11 2 L15 4 L6 13 Z" fill="#a8dcdc" stroke="#000" stroke-width="1.2"/><rect x="1.5" y="10.5" width="4.5" height="4.5" fill="#a8dcdc" stroke="#000" stroke-width="1.5"/></svg>
<svg style="left:258px;top:747px" width="16" height="16" viewBox="0 0 16 16"><path d="M2 5 H12 V15 H2 Z" fill="#a8dcdc"/><path d="M2 5 H12 V15 H2 Z M2 5 L5 2 H15 V12 L12 15 M12 5 L15 2" fill="none" stroke="#000" stroke-width="1.2"/><rect x="1" y="4" width="2" height="2" fill="#000"/><rect x="11" y="4" width="2" height="2" fill="#000"/><rect x="1" y="14" width="2" height="2" fill="#000"/><rect x="11" y="14" width="2" height="2" fill="#000"/><rect x="4" y="1" width="2" height="2" fill="#000"/><rect x="14" y="1" width="2" height="2" fill="#000"/><rect x="14" y="11" width="2" height="2" fill="#000"/></svg>
<svg style="left:281px;top:747px" width="16" height="16" viewBox="0 0 16 16"><path d="M2 5 H12 V15 H2 Z M2 5 L5 2 H15 V12 L12 15 M12 5 L15 2" fill="none" stroke="#000" stroke-width="1.2"/><rect x="1" y="4" width="2" height="2" fill="#000"/><rect x="11" y="4" width="2" height="2" fill="#000"/><rect x="1" y="14" width="2" height="2" fill="#000"/><rect x="11" y="14" width="2" height="2" fill="#000"/><rect x="4" y="1" width="2" height="2" fill="#000"/><rect x="14" y="1" width="2" height="2" fill="#000"/><rect x="14" y="11" width="2" height="2" fill="#000"/></svg>
<svg style="left:304px;top:747px" width="16" height="16" viewBox="0 0 16 16"><path d="M2 5 H12 V15 H2 Z" fill="#a8dcdc"/><path d="M2 5 H12 V15 H2 Z M2 5 L5 2 H15 V12 L12 15 M12 5 L15 2" fill="none" stroke="#9d9a8d" stroke-width="1.2"/></svg>
<svg style="left:334px;top:747px" width="16" height="16" viewBox="0 0 16 16"><path d="M1 14 L5 8 L7 11 L10 5 L12 8 L15 3" fill="none" stroke="#9d9a8d" stroke-width="1.2"/></svg>
<svg style="left:359px;top:747px" width="16" height="16" viewBox="0 0 16 16"><circle cx="4" cy="9" r="2" fill="#fff" stroke="#000"/><circle cx="11" cy="3" r="2" fill="#fff" stroke="#000"/><path d="M4 11 V14 M2 12 L4 15 L6 12 M11 5 V9 M9 7 L11 10 L13 7" fill="none" stroke="#283898" stroke-width="1.5"/></svg>
<svg style="left:381px;top:747px" width="16" height="16" viewBox="0 0 16 16"><path d="M2 15 V8 L5 5 H14 V12 M2 8 H11 V15 M11 8 L14 5" fill="none" stroke="#000" stroke-width="1.6"/></svg>
<svg style="left:402px;top:747px" width="16" height="16" viewBox="0 0 16 16"><path d="M8 1 V9" stroke="#e04020" stroke-width="3"/><path d="M4 6 L8 11 L12 6 Z" fill="#e04020"/><rect x="5.5" y="11.5" width="5" height="4" fill="#fff" stroke="#000" stroke-width="1.5"/></svg>
<svg style="left:431px;top:747px" width="16" height="16" viewBox="0 0 16 16"><path d="M8 1 V8" stroke="#e04020" stroke-width="3"/><path d="M4 5 L8 10 L12 5 Z" fill="#e04020"/><path d="M1 12 H15 M1 14.5 H15" stroke="#000" stroke-width="1.2"/><path d="M1 13.2 H15" stroke="#98d0d0" stroke-width="1"/></svg>
<svg style="left:454px;top:747px" width="16" height="16" viewBox="0 0 16 16"><path d="M1 14 L6 9 H15 L10 14 Z" fill="#a8dcdc" stroke="#000" stroke-width="1.3"/><path d="M8 1 V9" stroke="#e04020" stroke-width="3"/><path d="M4 6 L8 11 L12 6 Z" fill="#e04020"/></svg>
<svg style="left:478px;top:747px" width="16" height="16" viewBox="0 0 16 16"><path d="M1 14 L6 9 H15 L10 14 Z" fill="#a8dcdc" stroke="#000" stroke-width="1.3"/><path d="M8 1 V9" stroke="#283898" stroke-width="3"/><path d="M4 6 L8 11 L12 6 Z" fill="#283898"/></svg>
<svg style="left:500px;top:747px" width="16" height="16" viewBox="0 0 16 16"><path d="M1.5 1 L5 5 V14 L1.5 15 Z" fill="#a8dcdc" stroke="#000" stroke-width="1.2"/><path d="M4 8 H15" stroke="#283898" stroke-width="3"/><path d="M7 5 L3 8 L7 11 Z" fill="#283898"/></svg>
<svg style="left:524px;top:747px" width="16" height="16" viewBox="0 0 16 16"><path d="M3 1 H7 M3 1 V5 M5 1 V5 M7 1 V5" stroke="#9d9a8d"/><path d="M2 15 L15 3" stroke="#9d9a8d" stroke-width="1.5"/><circle cx="10" cy="8" r="2" fill="#9d9a8d"/><path d="M1 7 H15" stroke="#9d9a8d"/></svg>
<svg style="left:552px;top:747px" width="16" height="16" viewBox="0 0 16 16"><path d="M1 6 L4 3 H15 L12 6 Z M1 9 L4 6 H15 L12 9 Z M1 12 L4 9 H15 L12 12 Z" fill="#9d9a8d"/></svg>
<svg style="left:575px;top:747px" width="16" height="16" viewBox="0 0 16 16"><path d="M1 13 L4 10 H15 L12 13 Z" fill="#fff" stroke="#000"/><path d="M1 10 L4 7 H15 L12 10 Z" fill="#fff" stroke="#000"/><path d="M1 7 L4 4 H15 L12 7 Z" fill="#f0e040" stroke="#000"/></svg>
<svg style="left:598px;top:747px" width="16" height="16" viewBox="0 0 16 16"><path d="M1 14 L5 10 H15 L11 14 Z" fill="#f0d020" stroke="#000" stroke-width="1.2"/><path d="M3 5 Q7 0 10 4 L11 9" fill="none" stroke="#e04020" stroke-width="3"/><path d="M8 7 L11 11 L14 6 Z" fill="#e04020"/></svg>
<svg style="left:629px;top:747px" width="16" height="16" viewBox="0 0 16 16"><rect x="1.5" y="2.5" width="11" height="11" fill="#b060a8" stroke="#207868" stroke-width="1.5"/></svg>
<svg style="left:651px;top:747px" width="16" height="16" viewBox="0 0 16 16"><path d="M1 14 L5 10 H15 L11 14 Z" fill="#b060a8" stroke="#207868" stroke-width="1.3"/><path d="M8 2 V12" stroke="#e04040" stroke-width="1"/></svg>
<svg style="left:675px;top:747px" width="16" height="16" viewBox="0 0 16 16"><rect x="1.5" y="2.5" width="11" height="11" fill="#707830" stroke="#207868" stroke-width="1.5"/></svg>
<svg style="left:697px;top:747px" width="16" height="16" viewBox="0 0 16 16"><path d="M1 14 L5 10 H15 L11 14 Z" fill="#807828" stroke="#207868" stroke-width="1.3"/><path d="M8 2 V12" stroke="#e04040" stroke-width="1"/></svg>
<svg style="left:725px;top:747px" width="16" height="16" viewBox="0 0 16 16"><path d="M2 9 V2 H8 V9 M5 2 V9" fill="none" stroke="#9d9a8d" stroke-width="1.2"/><rect x="10" y="10" width="5" height="5" fill="#9d9a8d"/></svg>
<svg style="left:757px;top:747px" width="16" height="16" viewBox="0 0 16 16"><path d="M1 4 H6 V14 H1 Z M6 6 L15 4 V11 L6 13" fill="#9d9a8d"/><path d="M3 1 V3 M3 14 V16" stroke="#9d9a8d" stroke-width="1.5"/></svg>
<svg style="left:780px;top:747px" width="16" height="16" viewBox="0 0 16 16"><path d="M1 4 H6 V14 H1 Z M6 6 L15 4 V11 L6 13" fill="#9d9a8d"/><path d="M3 1 V3 M3 14 V16" stroke="#9d9a8d" stroke-width="1.5"/></svg>
<svg style="left:803px;top:747px" width="16" height="16" viewBox="0 0 16 16"><rect x="1.5" y="1.5" width="7" height="13" fill="#fff" stroke="#000" stroke-width="1.5"/><path d="M3 4 H7 M3 6 H7 M3 8 H7 M3 10 H7 M3 12 H7" stroke="#000"/><rect x="1" y="1" width="9" height="2" fill="#000"/><path d="M9 8 L15 3 V11 L9 15 Z" fill="#d04020"/></svg>
<svg style="left:826px;top:747px" width="16" height="16" viewBox="0 0 16 16"><rect x="1.5" y="1.5" width="7" height="13" fill="#fff" stroke="#000" stroke-width="1.5"/><path d="M3 4 H7 M3 6 H7 M3 8 H7 M3 10 H7 M3 12 H7" stroke="#000"/><rect x="1" y="1" width="9" height="2" fill="#000"/><path d="M9 9 L15 3 M9 12 L15 6 M9 15 L15 9" stroke="#207870" stroke-width="1.2"/><path d="M10 8 L15 4 V10 L10 14 Z" fill="#a8dcdc"/></svg>
<svg style="left:850px;top:747px" width="16" height="16" viewBox="0 0 16 16"><path d="M2 2 L14 14 M14 3 L3 14 M5 2 L2 5 M14 11 L11 14" stroke="#9d9a8d" stroke-width="2"/></svg>
<svg style="left:873px;top:747px" width="16" height="16" viewBox="0 0 16 16"><path d="M1 9 L6 5 H15 L10 9 Z" fill="#9d9a8d"/><path d="M8 1 V15" stroke="#9d9a8d" stroke-width="1.2"/></svg>
<svg style="left:896px;top:747px" width="16" height="16" viewBox="0 0 16 16"><path d="M1 4 H3 V11 M1 11 H5" fill="none" stroke="#000" stroke-width="1.8"/><rect x="1" y="1" width="2" height="2" fill="#000"/><path d="M6 4 H14 M6 14 H14 M10 4 V14" stroke="#000" stroke-width="3.5"/><path d="M6.8 4 H13.2 M6.8 14 H13.2 M10 4.8 V13.2" stroke="#a8dcdc" stroke-width="1.6"/></svg>
<svg style="left:919px;top:747px" width="16" height="16" viewBox="0 0 16 16"><path d="M1 4 H3 V12 M1 12 H5" fill="none" stroke="#9d9a8d" stroke-width="1.8"/><rect x="1" y="1" width="2" height="2" fill="#9d9a8d"/><path d="M6 14 L15 5 V14 Z" fill="#9d9a8d"/></svg>
<svg style="left:942px;top:747px" width="16" height="16" viewBox="0 0 16 16"><rect x="6.5" y="1.5" width="8" height="9" fill="#802818" stroke="#000"/><rect x="4" y="4" width="7" height="8" fill="#c03020" stroke="#000"/><rect x="1.5" y="6.5" width="6" height="8" fill="#fff" stroke="#000" stroke-width="1.2"/><path d="M2 13 L7 8 M2 10 L5 7 M4 14 L7 11" stroke="#000"/></svg>
<svg style="left:973px;top:747px" width="16" height="16" viewBox="0 0 16 16"><path d="M1 2 H15" stroke="#e05030" stroke-width="1"/><text x="1" y="11" font-family="Liberation Sans" font-weight="bold" font-size="8" fill="#000" textLength="14">EXT</text><path d="M1 14 H15" stroke="#3040a0" stroke-width="1.2"/></svg>
<svg style="left:996px;top:747px" width="16" height="16" viewBox="0 0 16 16"><text x="3" y="7" font-family="Liberation Sans" font-weight="bold" font-size="7" fill="#283890" textLength="12">VAL</text><path d="M2 14 L6 10 H15" fill="none" stroke="#000" stroke-width="1.6"/><path d="M3 8 H15" stroke="#283890"/></svg>
<svg style="left:1018px;top:747px" width="16" height="16" viewBox="0 0 16 16"><path d="M2 14 L8 6" stroke="#60a040" stroke-width="1.5"/></svg>
</body></html>
